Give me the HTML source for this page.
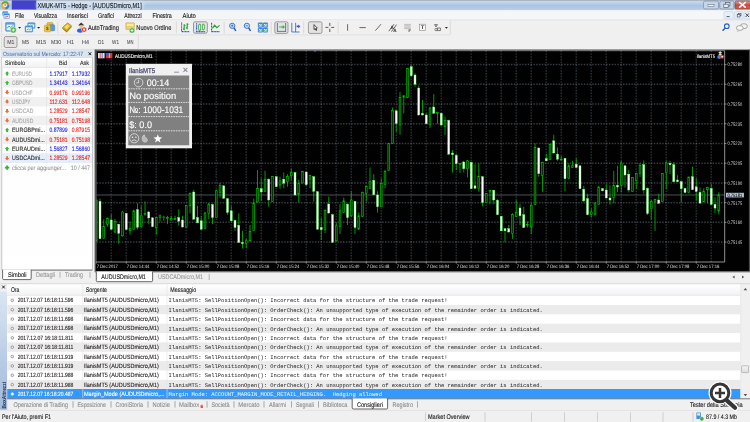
<!DOCTYPE html>
<html><head><meta charset="utf-8"><title>XMUK-MT5 - Hedge - [AUDUSDmicro,M1]</title>
<style>
html,body{margin:0;padding:0;background:#f0f0f0;overflow:hidden}
svg{display:block;will-change:transform;opacity:0.999}
text{font-family:"Liberation Sans","DejaVu Sans",sans-serif;white-space:pre;text-rendering:geometricPrecision}
text.m{font-family:"Liberation Mono","DejaVu Sans Mono",monospace}
</style></head><body>
<svg width="750" height="422" viewBox="0 0 750 422">
<defs>
<linearGradient id="gt" x1="0" y1="0" x2="0" y2="1"><stop offset="0" stop-color="#8f949a"/><stop offset="0.08" stop-color="#c9dbee"/><stop offset="0.35" stop-color="#b9cfe8"/><stop offset="0.55" stop-color="#a9c3e1"/><stop offset="0.85" stop-color="#b3cbe6"/><stop offset="1" stop-color="#c3d6eb"/></linearGradient>
<linearGradient id="gh" x1="0" y1="0" x2="0" y2="1"><stop offset="0" stop-color="#ffffff"/><stop offset="1" stop-color="#f1f2f4"/></linearGradient>
<linearGradient id="gs" x1="0" y1="0" x2="0" y2="1"><stop offset="0" stop-color="#dfe8f4"/><stop offset="1" stop-color="#9fb9dc"/></linearGradient>
<linearGradient id="gb" x1="0" y1="0" x2="0" y2="1"><stop offset="0" stop-color="#f6f6f6"/><stop offset="1" stop-color="#dcdcdc"/></linearGradient>
<linearGradient id="gx" x1="0" y1="0" x2="0" y2="1"><stop offset="0" stop-color="#e2a49c"/><stop offset="0.5" stop-color="#c9483c"/><stop offset="1" stop-color="#d4604c"/></linearGradient>
<filter id="blur" x="-2%" y="-2%" width="104%" height="104%" color-interpolation-filters="sRGB"><feGaussianBlur stdDeviation="0.3"/></filter>
<filter id="glow" x="-10%" y="-60%" width="120%" height="220%"><feGaussianBlur stdDeviation="1.6"/></filter>
<clipPath id="cc"><rect x="96" y="51" width="628.6" height="211"/></clipPath>
</defs>

<g filter="url(#blur)">
<rect x="-6.00" y="-6.00" width="762.00" height="434.00" fill="#f0f0f0" />
<rect x="-6.00" y="0.00" width="762.00" height="10.30" fill="url(#gt)" />
<rect x="-6.00" y="-6.00" width="762.00" height="6.20" fill="#8f949a" />
<circle cx="5.2" cy="5.3" r="4.1" fill="#d6b13c"/><path d="M5.2 5.3 L1.6 3.4 A4.1 4.1 0 0 1 8.9 3.6 Z" fill="#55ae42"/><path d="M5.2 5.3 L9.2 4.4 A4.1 4.1 0 0 1 5.6 9.4 Z" fill="#3f7cc6"/><circle cx="5.1" cy="5.2" r="2.0" fill="#f4efe4"/><circle cx="5.2" cy="5.1" r="1.0" fill="#e8903c"/>
<rect x="11.80" y="0.30" width="24.50" height="9.20" fill="#4242cb" />
<rect x="36" y="1.6" width="108" height="7.4" rx="3.5" fill="#ffffff" opacity="0.42" filter="url(#glow)"/>
<text  x="37.50" y="7.93" font-size="7.31" fill="#15171a" textLength="104.20" lengthAdjust="spacingAndGlyphs" stroke="#15171a" stroke-width="0.12" >XMUK-MT5 - Hedge - [AUDUSDmicro,M1]</text>
<rect x="703.50" y="1.00" width="15.00" height="8.00" fill="#c3d5ea" rx="1.5" stroke="#6f8299" stroke-width="0.6"/>
<rect x="708.00" y="4.60" width="6.00" height="1.80" fill="#f4f6f8" stroke="#59636f" stroke-width="0.5"/>
<rect x="719.80" y="1.00" width="14.00" height="8.00" fill="#c3d5ea" rx="1.5" stroke="#6f8299" stroke-width="0.6"/>
<rect x="725.50" y="2.60" width="4.40" height="3.40" fill="#e6ebf0" stroke="#555f6b" stroke-width="0.7"/>
<rect x="723.80" y="4.20" width="4.40" height="3.40" fill="#eef2f6" stroke="#555f6b" stroke-width="0.7"/>
<rect x="735.00" y="1.00" width="21.50" height="8.00" fill="url(#gx)" rx="1.5" stroke="#7a3a33" stroke-width="0.6"/>
<path d="M739.6 2.6 L745.2 7.2 M745.2 2.6 L739.6 7.2" stroke="#ffffff" stroke-width="1.6" stroke-linecap="round"/>
<rect x="-6.00" y="10.30" width="762.00" height="9.40" fill="#f5f6f8" />
<line x1="-6.00" y1="19.90" x2="756.00" y2="19.90" stroke="#dadbdd" stroke-width="0.7" />
<rect x="2.30" y="11.20" width="5.80" height="4.60" fill="#4f9be8" rx="0.8"/>
<rect x="3.40" y="13.20" width="6.40" height="5.60" fill="#3a86dd" rx="0.8" stroke="#eaf3fd" stroke-width="0.5"/>
<rect x="4.30" y="15.20" width="4.60" height="2.80" fill="#f4f7fb" />
<line x1="4.80" y1="17.20" x2="8.20" y2="16.40" stroke="#e0522a" stroke-width="0.9" />
<text  x="15.00" y="17.55" font-size="6.8" fill="#1c1c1c" textLength="9.00" lengthAdjust="spacingAndGlyphs" stroke="#1c1c1c" stroke-width="0.12" >File</text>
<text  x="34.00" y="17.55" font-size="6.8" fill="#1c1c1c" textLength="23.00" lengthAdjust="spacingAndGlyphs" stroke="#1c1c1c" stroke-width="0.12" >Visualizza</text>
<text  x="67.00" y="17.55" font-size="6.8" fill="#1c1c1c" textLength="21.00" lengthAdjust="spacingAndGlyphs" stroke="#1c1c1c" stroke-width="0.12" >Inserisci</text>
<text  x="98.00" y="17.55" font-size="6.8" fill="#1c1c1c" textLength="16.00" lengthAdjust="spacingAndGlyphs" stroke="#1c1c1c" stroke-width="0.12" >Grafici</text>
<text  x="124.20" y="17.55" font-size="6.8" fill="#1c1c1c" textLength="17.50" lengthAdjust="spacingAndGlyphs" stroke="#1c1c1c" stroke-width="0.12" >Attrezzi</text>
<text  x="152.50" y="17.55" font-size="6.8" fill="#1c1c1c" textLength="19.20" lengthAdjust="spacingAndGlyphs" stroke="#1c1c1c" stroke-width="0.12" >Finestra</text>
<text  x="182.50" y="17.55" font-size="6.8" fill="#1c1c1c" textLength="13.30" lengthAdjust="spacingAndGlyphs" stroke="#1c1c1c" stroke-width="0.12" >Aiuto</text>
<rect x="724.00" y="11.60" width="9.30" height="7.40" fill="#e7eff9" rx="0.8" stroke="#b9c9de" stroke-width="0.5"/>
<rect x="734.60" y="11.60" width="8.60" height="7.40" fill="#e7eff9" rx="0.8" stroke="#b9c9de" stroke-width="0.5"/>
<rect x="744.20" y="11.60" width="6.50" height="7.40" fill="#e7eff9" rx="0.8" stroke="#b9c9de" stroke-width="0.5"/>
<line x1="726.60" y1="16.60" x2="729.60" y2="16.60" stroke="#3a4450" stroke-width="0.9" />
<rect x="738.20" y="13.40" width="2.80" height="2.40" fill="none" stroke="#3a4450" stroke-width="0.6"/>
<rect x="737.20" y="14.60" width="2.80" height="2.40" fill="#e7eff9" stroke="#3a4450" stroke-width="0.6"/>
<path d="M745.6 13.4 L749 17 M749 13.4 L745.6 17" stroke="#2c343e" stroke-width="0.9"/>
<rect x="-6.00" y="20.30" width="456.30" height="14.60" fill="#f0f0f0" />
<line x1="450.30" y1="20.50" x2="450.30" y2="34.80" stroke="#cfcfcf" stroke-width="0.6" />
<line x1="-6.00" y1="34.90" x2="450.30" y2="34.90" stroke="#d5d5d5" stroke-width="0.6" />
<line x1="-6.00" y1="49.40" x2="138.30" y2="49.40" stroke="#d5d5d5" stroke-width="0.6" />
<line x1="138.30" y1="35.20" x2="138.30" y2="49.40" stroke="#cfcfcf" stroke-width="0.6" />
<line x1="1.60" y1="21.50" x2="1.60" y2="33.30" stroke="#b4b4b4" stroke-width="0.7" stroke-dasharray="0.7 0.7"/>
<line x1="1.60" y1="36.30" x2="1.60" y2="48.10" stroke="#b4b4b4" stroke-width="0.7" stroke-dasharray="0.7 0.7"/>
<line x1="303.70" y1="21.50" x2="303.70" y2="33.30" stroke="#b4b4b4" stroke-width="0.7" stroke-dasharray="0.7 0.7"/>
<line x1="58.00" y1="21.80" x2="58.00" y2="33.20" stroke="#b9b9b9" stroke-width="0.6" />
<line x1="58.60" y1="21.80" x2="58.60" y2="33.20" stroke="#fbfbfb" stroke-width="0.5" />
<line x1="176.40" y1="21.80" x2="176.40" y2="33.20" stroke="#b9b9b9" stroke-width="0.6" />
<line x1="177.00" y1="21.80" x2="177.00" y2="33.20" stroke="#fbfbfb" stroke-width="0.5" />
<line x1="224.30" y1="21.80" x2="224.30" y2="33.20" stroke="#b9b9b9" stroke-width="0.6" />
<line x1="224.90" y1="21.80" x2="224.90" y2="33.20" stroke="#fbfbfb" stroke-width="0.5" />
<line x1="271.30" y1="21.80" x2="271.30" y2="33.20" stroke="#b9b9b9" stroke-width="0.6" />
<line x1="271.90" y1="21.80" x2="271.90" y2="33.20" stroke="#fbfbfb" stroke-width="0.5" />
<line x1="338.30" y1="21.80" x2="338.30" y2="33.20" stroke="#b9b9b9" stroke-width="0.6" />
<line x1="338.90" y1="21.80" x2="338.90" y2="33.20" stroke="#fbfbfb" stroke-width="0.5" />
<rect x="5.60" y="22.60" width="9.00" height="8.60" fill="#58a4ea" rx="0.7" stroke="#2f75c8" stroke-width="0.5"/>
<rect x="6.60" y="24.60" width="7.00" height="5.60" fill="#e9f2fb" />
<path d="M7 28.4 L9 26 L10.6 27.6 L13 25.4" stroke="#3da53a" stroke-width="0.8" fill="none"/>
<circle cx="13.3" cy="30" r="3.0" fill="#3cb030" stroke="#f0f0f0" stroke-width="0.5"/>
<path d="M11.6 30 H15 M13.3 28.3 V31.7" stroke="#fff" stroke-width="1"/>
<path d="M18.10 27.05 L21.10 27.05 L19.60 28.85 Z" fill="#222"/>
<rect x="27.80" y="22.80" width="7.20" height="5.40" fill="#5aa4ea" rx="0.6" stroke="#2f75c8" stroke-width="0.5"/>
<rect x="28.60" y="24.00" width="5.60" height="3.40" fill="#eaf3fc" />
<rect x="25.20" y="26.00" width="7.40" height="6.00" fill="#4d9ae6" rx="0.6" stroke="#2f75c8" stroke-width="0.5"/>
<rect x="26.00" y="27.40" width="5.80" height="3.80" fill="#eef5fc" />
<path d="M26.6 30 L28.4 29 L29.6 29.8 L31.4 28.4" stroke="#3da53a" stroke-width="0.8" fill="none"/>
<path d="M29.4 25.8 L30.8 24.8 L32 25.4 L33.6 24.4" stroke="#3da53a" stroke-width="0.7" fill="none"/>
<path d="M37.10 27.05 L40.10 27.05 L38.60 28.85 Z" fill="#222"/>
<rect x="47.00" y="22.60" width="6.00" height="7.00" fill="#e6c04e" rx="0.8" stroke="#b88d1c" stroke-width="0.5"/>
<rect x="49.40" y="24.80" width="5.20" height="6.00" fill="#4f9de8" rx="0.8" stroke="#2b6fc0" stroke-width="0.5"/>
<rect x="44.40" y="25.20" width="6.00" height="6.60" fill="#efc940" rx="0.8" stroke="#b88d1c" stroke-width="0.5"/>
<text  x="46.10" y="30.31" font-size="4.74" fill="#7a5a08" font-weight="bold" stroke="#7a5a08" stroke-width="0.12" >$</text>
<path d="M62.4 27.4 L67.6 22.8 L71.6 25.8 L66.6 31.0 Z" fill="#dcae24" stroke="#94720f" stroke-width="0.5"/>
<path d="M64.2 27.2 L67.5 24.3 L69.9 26.0 L66.7 29.3 Z" fill="#f6da68"/>
<path d="M62.4 27.4 L66.6 31.0 L71.6 25.8 L71.6 27.2 L66.6 32.6 L62.4 28.8 Z" fill="#a67c12"/>
<path d="M78.2 25.2 L81.2 22.6 L84.2 25.2 L81.2 26.0 Z" fill="#3a3a3a"/>
<circle cx="81.3" cy="27.0" r="1.9" fill="#e9c09a"/>
<ellipse cx="80.2" cy="30.6" rx="3.2" ry="2.2" fill="#2b66d6"/>
<circle cx="84.1" cy="29.6" r="2.6" fill="#e23426" stroke="#ffffff" stroke-width="0.5"/>
<rect x="83.10" y="28.60" width="2.00" height="2.00" fill="#ffffff" />
<text  x="88.00" y="30.05" font-size="6.8" fill="#1c1c1c" textLength="31.00" lengthAdjust="spacingAndGlyphs" stroke="#1c1c1c" stroke-width="0.12" >AutoTrading</text>
<rect x="125.80" y="22.80" width="8.60" height="6.80" fill="#ecd06a" rx="0.6" stroke="#c4a23a" stroke-width="0.5"/>
<rect x="126.80" y="23.80" width="6.60" height="2.20" fill="#f8eaae" />
<circle cx="132.0" cy="30.4" r="2.7" fill="#3cb030" stroke="#f0f0f0" stroke-width="0.5"/>
<path d="M130.5 30.4 H133.5 M132 28.9 V31.9" stroke="#fff" stroke-width="0.9"/>
<text  x="136.30" y="30.05" font-size="6.8" fill="#1c1c1c" textLength="35.00" lengthAdjust="spacingAndGlyphs" stroke="#1c1c1c" stroke-width="0.12" >Nuovo Ordine</text>
<path d="M181.6 22.6 V31.6 H189.4" stroke="#2256d2" stroke-width="1.05" fill="none" stroke-dasharray="1.1 0.45"/>
<path d="M184.2 24.2 V30.2 M183 28.8 H184.2 M184.2 25.4 H185.4 M187.2 23.2 V29.2 M186 27.8 H187.2 M187.2 24.4 H188.4" stroke="#2a9f32" stroke-width="1.15" fill="none"/>
<rect x="193.50" y="21.80" width="13.80" height="11.40" fill="#e3e3e3" rx="1.6" stroke="#747474" stroke-width="0.7"/>
<path d="M196.6 23.2 V31.6 H204.8" stroke="#2256d2" stroke-width="1.05" fill="none" stroke-dasharray="1.1 0.45"/>
<line x1="199.70" y1="23.60" x2="199.70" y2="31.00" stroke="#2a9f32" stroke-width="0.7" />
<line x1="203.30" y1="23.60" x2="203.30" y2="30.40" stroke="#2a9f32" stroke-width="0.7" />
<rect x="198.70" y="24.80" width="2.00" height="5.20" fill="#f2fbf2" stroke="#2a9f32" stroke-width="0.7"/>
<rect x="202.30" y="24.80" width="2.00" height="4.40" fill="#f2fbf2" stroke="#2a9f32" stroke-width="0.7"/>
<path d="M211.6 22.8 V31.6 H219.8" stroke="#2256d2" stroke-width="1.05" fill="none" stroke-dasharray="1.1 0.45"/>
<path d="M212.4 28.4 L214.6 25.2 L216.8 27.6 L219.6 25.4" stroke="#2a9f32" stroke-width="1.15" fill="none"/>
<circle cx="232.2" cy="25.8" r="2.6" fill="#d4e6fa" stroke="#2f63c8" stroke-width="0.9"/>
<line x1="234.00" y1="27.80" x2="235.80" y2="31.00" stroke="#2a58bc" stroke-width="1.5" />
<line x1="230.90" y1="25.80" x2="233.50" y2="25.80" stroke="#2a58bc" stroke-width="0.7" />
<line x1="232.20" y1="24.50" x2="232.20" y2="27.10" stroke="#2a58bc" stroke-width="0.7" />
<circle cx="246.9" cy="25.8" r="2.6" fill="#d4e6fa" stroke="#2f63c8" stroke-width="0.9"/>
<line x1="248.70" y1="27.80" x2="250.50" y2="31.00" stroke="#2a58bc" stroke-width="1.5" />
<line x1="245.60" y1="25.80" x2="248.20" y2="25.80" stroke="#2a58bc" stroke-width="0.7" />
<rect x="258.20" y="22.80" width="4.40" height="4.40" fill="#3f8ee6" rx="0.4" stroke="#2b6fc0" stroke-width="0.4"/>
<rect x="259.00" y="24.00" width="2.80" height="2.50" fill="#e4eef9" />
<path d="M259.10 26.00 L260.30 24.70 L261.70 25.40" stroke="#3fb53a" stroke-width="0.8" fill="none"/>
<rect x="258.20" y="27.80" width="4.40" height="4.40" fill="#3f8ee6" rx="0.4" stroke="#2b6fc0" stroke-width="0.4"/>
<rect x="259.00" y="29.00" width="2.80" height="2.50" fill="#e4eef9" />
<path d="M259.10 31.00 L260.30 29.70 L261.70 30.40" stroke="#3fb53a" stroke-width="0.8" fill="none"/>
<rect x="263.20" y="22.80" width="4.40" height="4.40" fill="#3f8ee6" rx="0.4" stroke="#2b6fc0" stroke-width="0.4"/>
<rect x="264.00" y="24.00" width="2.80" height="2.50" fill="#e4eef9" />
<path d="M264.10 26.00 L265.30 24.70 L266.70 25.40" stroke="#3fb53a" stroke-width="0.8" fill="none"/>
<rect x="263.20" y="27.80" width="4.40" height="4.40" fill="#3f8ee6" rx="0.4" stroke="#2b6fc0" stroke-width="0.4"/>
<rect x="264.00" y="29.00" width="2.80" height="2.50" fill="#e4eef9" />
<path d="M264.10 31.00 L265.30 29.70 L266.70 30.40" stroke="#3fb53a" stroke-width="0.8" fill="none"/>
<rect x="274.80" y="21.80" width="13.20" height="11.60" fill="#e3e3e3" rx="1.6" stroke="#7b7b7b" stroke-width="0.7"/>
<path d="M277.4 23 V32 M277.4 31.4 H285.6 M285.6 23 V32" stroke="#2a62c8" stroke-width="0.8" fill="none"/>
<path d="M279.2 26.6 H282.6 V25 L285 27 L282.6 29 V27.6 H279.2 Z" fill="#34b23a"/>
<path d="M291.8 22.8 V32 H299.6 M295.6 22.8 V32" stroke="#2a62c8" stroke-width="0.8" fill="none"/>
<path d="M296.6 25.4 H298.4 V24.4 L300.4 26.4 L298.4 28.2 V27.2 H296.6 Z" fill="#2a62c8"/>
<rect x="308.40" y="21.80" width="13.60" height="11.60" fill="#e3e3e3" rx="1.6" stroke="#7b7b7b" stroke-width="0.7"/>
<path d="M314.0 24.6 L314.0 29.6 L315.1 28.6 L316.0 30.5 L316.8 30.1 L315.9 28.3 L317.3 28.1 Z" fill="#fdfdfd" stroke="#0c0c0c" stroke-width="0.7" stroke-linejoin="round"/>
<path d="M329.8 22.8 V26 M329.8 28.8 V32 M325.4 27.4 H328.4 M331.2 27.4 H334.2" stroke="#333" stroke-width="0.8"/>
<line x1="347.60" y1="24.20" x2="347.60" y2="30.80" stroke="#444" stroke-width="0.8" />
<line x1="359.40" y1="27.60" x2="365.80" y2="27.60" stroke="#444" stroke-width="0.8" />
<line x1="375.40" y1="30.60" x2="381.00" y2="24.20" stroke="#444" stroke-width="0.8" />
<path d="M388.8 31.2 L394 24.2 M391.4 31.6 L396.6 24.6" stroke="#444" stroke-width="0.8"/>
<text  x="390.60" y="28.63" font-size="4.53" fill="#333" font-weight="bold" stroke="#333" stroke-width="0.12" >A</text>
<text  x="393.20" y="32.03" font-size="4.53" fill="#333" font-weight="bold" stroke="#333" stroke-width="0.12" >A</text>
<line x1="404.20" y1="24.40" x2="410.80" y2="24.40" stroke="#9a9a9a" stroke-width="0.6" />
<line x1="404.20" y1="25.80" x2="410.80" y2="25.80" stroke="#9a9a9a" stroke-width="0.6" />
<line x1="404.20" y1="27.20" x2="410.80" y2="27.20" stroke="#9a9a9a" stroke-width="0.6" />
<line x1="404.20" y1="28.60" x2="410.80" y2="28.60" stroke="#9a9a9a" stroke-width="0.6" />
<text  x="408.60" y="31.54" font-size="3.71" fill="#444" font-weight="bold" stroke="#444" stroke-width="0.12" >F</text>
<rect x="419.40" y="24.20" width="6.20" height="6.20" fill="#f6f6f6" stroke="#8a8a8a" stroke-width="0.6"/>
<text  x="420.90" y="29.25" font-size="5.15" fill="#333" font-weight="bold" stroke="#333" stroke-width="0.12" >T</text>
<path d="M434.6 24.6 L437.4 24.6 L436 27 Z M437.4 28 h3 v2.6 h-3 Z" fill="none" stroke="#444" stroke-width="0.7"/>
<circle cx="436" cy="29.6" r="1.2" fill="none" stroke="#444" stroke-width="0.6"/>
<path d="M444.90 27.05 L447.90 27.05 L446.40 28.85 Z" fill="#222"/>
<circle cx="726.8" cy="26.2" r="2.3" fill="#eaf2ff" stroke="#2a5fc4" stroke-width="1.1"/>
<line x1="725.20" y1="28.00" x2="722.60" y2="30.80" stroke="#2a5fc4" stroke-width="1.5" />
<ellipse cx="743.8" cy="26.2" rx="3.6" ry="2.5" fill="#f3f3f3" stroke="#7e7e7e" stroke-width="0.65"/>
<ellipse cx="739.8" cy="28.0" rx="3.4" ry="2.4" fill="#fafafa" stroke="#7e7e7e" stroke-width="0.65"/>
<path d="M738.4 30 L737.4 31.6 L740 30.3 Z" fill="#fafafa" stroke="#9a9a9a" stroke-width="0.4"/>
<rect x="4.20" y="36.60" width="12.80" height="10.90" fill="#e4e4e4" rx="1.6" stroke="#7b7b7b" stroke-width="0.7"/>
<text  x="7.20" y="44.18" font-size="5.77" fill="#4a4a4a" textLength="7.20" lengthAdjust="spacingAndGlyphs" stroke="#4a4a4a" stroke-width="0.05" >M1</text>
<text  x="22.00" y="44.18" font-size="5.77" fill="#4a4a4a" textLength="7.00" lengthAdjust="spacingAndGlyphs" stroke="#4a4a4a" stroke-width="0.05" >M5</text>
<text  x="36.00" y="44.18" font-size="5.77" fill="#4a4a4a" textLength="10.00" lengthAdjust="spacingAndGlyphs" stroke="#4a4a4a" stroke-width="0.05" >M15</text>
<text  x="51.00" y="44.18" font-size="5.77" fill="#4a4a4a" textLength="10.00" lengthAdjust="spacingAndGlyphs" stroke="#4a4a4a" stroke-width="0.05" >M30</text>
<text  x="67.00" y="44.18" font-size="5.77" fill="#4a4a4a" textLength="7.00" lengthAdjust="spacingAndGlyphs" stroke="#4a4a4a" stroke-width="0.05" >H1</text>
<text  x="82.00" y="44.18" font-size="5.77" fill="#4a4a4a" textLength="7.00" lengthAdjust="spacingAndGlyphs" stroke="#4a4a4a" stroke-width="0.05" >H4</text>
<text  x="98.00" y="44.18" font-size="5.77" fill="#4a4a4a" textLength="6.00" lengthAdjust="spacingAndGlyphs" stroke="#4a4a4a" stroke-width="0.05" >D1</text>
<text  x="112.00" y="44.18" font-size="5.77" fill="#4a4a4a" textLength="7.00" lengthAdjust="spacingAndGlyphs" stroke="#4a4a4a" stroke-width="0.05" >W1</text>
<text  x="127.00" y="44.18" font-size="5.77" fill="#4a4a4a" textLength="6.40" lengthAdjust="spacingAndGlyphs" stroke="#4a4a4a" stroke-width="0.05" >MN</text>
<rect x="1.20" y="50.00" width="91.60" height="7.20" fill="#dbe5f3" />
<text  x="3.00" y="55.89" font-size="6.08" fill="#526a98" textLength="80.00" lengthAdjust="spacingAndGlyphs" >Osservatorio sul Mercato: 17:22:47</text>
<path d="M88.6 52.3 L91.2 55.1 M91.2 52.3 L88.6 55.1" stroke="#111" stroke-width="0.9"/>
<rect x="1.90" y="57.30" width="90.60" height="212.60" fill="#ffffff" stroke="#a8a8a8" stroke-width="0.6"/>
<rect x="2.00" y="57.60" width="90.00" height="9.80" fill="url(#gh)" />
<line x1="2.00" y1="67.50" x2="92.00" y2="67.50" stroke="#dcdcdc" stroke-width="0.6" />
<text  x="5.00" y="65.46" font-size="6.28" fill="#2c2c2c" textLength="20.00" lengthAdjust="spacingAndGlyphs" stroke="#2c2c2c" stroke-width="0.12" >Simbolo</text>
<text  x="59.00" y="65.46" font-size="6.28" fill="#2c2c2c" textLength="8.00" lengthAdjust="spacingAndGlyphs" stroke="#2c2c2c" stroke-width="0.12" >Bid</text>
<text  x="80.00" y="65.46" font-size="6.28" fill="#2c2c2c" textLength="9.00" lengthAdjust="spacingAndGlyphs" stroke="#2c2c2c" stroke-width="0.12" >Ask</text>
<path d="M7.1 71.21 L9.3 73.61 H8.1 V75.41 H6.1 V73.61 H4.9 Z" fill="#36ba36"/>
<text  x="12.00" y="75.69" font-size="6.33" fill="#a0a0a0" textLength="20.00" lengthAdjust="spacingAndGlyphs" stroke="#a0a0a0" stroke-width="0.05" >EURUSD</text>
<text  x="49.50" y="75.71" font-size="6.39" fill="#2222e6" textLength="18.10" lengthAdjust="spacingAndGlyphs" stroke="#2222e6" stroke-width="0.12" >1.17917</text>
<text  x="71.80" y="75.71" font-size="6.39" fill="#2222e6" textLength="18.20" lengthAdjust="spacingAndGlyphs" stroke="#2222e6" stroke-width="0.12" >1.17932</text>
<rect x="2.00" y="78.12" width="90.00" height="9.42" fill="#f0f0f0" />
<path d="M7.1 80.63 L9.3 83.03 H8.1 V84.83 H6.1 V83.03 H4.9 Z" fill="#36ba36"/>
<text  x="12.00" y="85.11" font-size="6.33" fill="#a0a0a0" textLength="20.50" lengthAdjust="spacingAndGlyphs" stroke="#a0a0a0" stroke-width="0.05" >GBPUSD</text>
<text  x="49.50" y="85.13" font-size="6.39" fill="#2222e6" textLength="18.10" lengthAdjust="spacingAndGlyphs" stroke="#2222e6" stroke-width="0.12" >1.34143</text>
<text  x="71.80" y="85.13" font-size="6.39" fill="#2222e6" textLength="18.20" lengthAdjust="spacingAndGlyphs" stroke="#2222e6" stroke-width="0.12" >1.34164</text>
<path d="M7.1 94.45 L9.3 92.05 H8.1 V90.25 H6.1 V92.05 H4.9 Z" fill="#f06a3c"/>
<text  x="12.00" y="94.53" font-size="6.33" fill="#a0a0a0" textLength="20.50" lengthAdjust="spacingAndGlyphs" stroke="#a0a0a0" stroke-width="0.05" >USDCHF</text>
<text  x="49.50" y="94.55" font-size="6.39" fill="#e62222" textLength="18.10" lengthAdjust="spacingAndGlyphs" stroke="#e62222" stroke-width="0.12" >0.99176</text>
<text  x="71.80" y="94.55" font-size="6.39" fill="#e62222" textLength="18.20" lengthAdjust="spacingAndGlyphs" stroke="#e62222" stroke-width="0.12" >0.99196</text>
<rect x="2.00" y="96.96" width="90.00" height="9.42" fill="#f0f0f0" />
<path d="M7.1 103.87 L9.3 101.47 H8.1 V99.67 H6.1 V101.47 H4.9 Z" fill="#f06a3c"/>
<text  x="12.00" y="103.95" font-size="6.33" fill="#a0a0a0" textLength="18.50" lengthAdjust="spacingAndGlyphs" stroke="#a0a0a0" stroke-width="0.05" >USDJPY</text>
<text  x="49.50" y="103.97" font-size="6.39" fill="#e62222" textLength="18.10" lengthAdjust="spacingAndGlyphs" stroke="#e62222" stroke-width="0.12" >112.631</text>
<text  x="71.80" y="103.97" font-size="6.39" fill="#e62222" textLength="18.20" lengthAdjust="spacingAndGlyphs" stroke="#e62222" stroke-width="0.12" >112.648</text>
<path d="M7.1 113.29 L9.3 110.89 H8.1 V109.09 H6.1 V110.89 H4.9 Z" fill="#f06a3c"/>
<text  x="12.00" y="113.37" font-size="6.33" fill="#a0a0a0" textLength="21.30" lengthAdjust="spacingAndGlyphs" stroke="#a0a0a0" stroke-width="0.05" >USDCAD</text>
<text  x="49.50" y="113.39" font-size="6.39" fill="#e62222" textLength="18.10" lengthAdjust="spacingAndGlyphs" stroke="#e62222" stroke-width="0.12" >1.28529</text>
<text  x="71.80" y="113.39" font-size="6.39" fill="#e62222" textLength="18.20" lengthAdjust="spacingAndGlyphs" stroke="#e62222" stroke-width="0.12" >1.28547</text>
<rect x="2.00" y="115.80" width="90.00" height="9.42" fill="#f0f0f0" />
<path d="M7.1 122.71 L9.3 120.31 H8.1 V118.51 H6.1 V120.31 H4.9 Z" fill="#f06a3c"/>
<text  x="12.00" y="122.79" font-size="6.33" fill="#a0a0a0" textLength="21.30" lengthAdjust="spacingAndGlyphs" stroke="#a0a0a0" stroke-width="0.05" >AUDUSD</text>
<text  x="49.50" y="122.81" font-size="6.39" fill="#e62222" textLength="18.10" lengthAdjust="spacingAndGlyphs" stroke="#e62222" stroke-width="0.12" >0.75181</text>
<text  x="71.80" y="122.81" font-size="6.39" fill="#e62222" textLength="18.20" lengthAdjust="spacingAndGlyphs" stroke="#e62222" stroke-width="0.12" >0.75198</text>
<path d="M7.1 127.73 L9.3 130.13 H8.1 V131.93 H6.1 V130.13 H4.9 Z" fill="#36ba36"/>
<text  x="12.00" y="132.21" font-size="6.33" fill="#2a2a2a" textLength="33.00" lengthAdjust="spacingAndGlyphs" stroke="#2a2a2a" stroke-width="0.12" >EURGBPmi...</text>
<text  x="49.50" y="132.23" font-size="6.39" fill="#2222e6" textLength="18.10" lengthAdjust="spacingAndGlyphs" stroke="#2222e6" stroke-width="0.12" >0.87899</text>
<text  x="71.80" y="132.23" font-size="6.39" fill="#e62222" textLength="18.20" lengthAdjust="spacingAndGlyphs" stroke="#e62222" stroke-width="0.12" >0.87915</text>
<rect x="2.00" y="134.64" width="90.00" height="9.42" fill="#f0f0f0" />
<path d="M7.1 141.55 L9.3 139.15 H8.1 V137.35 H6.1 V139.15 H4.9 Z" fill="#f06a3c"/>
<text  x="12.00" y="141.63" font-size="6.33" fill="#2a2a2a" textLength="32.70" lengthAdjust="spacingAndGlyphs" stroke="#2a2a2a" stroke-width="0.12" >AUDUSDmi...</text>
<text  x="49.50" y="141.65" font-size="6.39" fill="#e62222" textLength="18.10" lengthAdjust="spacingAndGlyphs" stroke="#e62222" stroke-width="0.12" >0.75181</text>
<text  x="71.80" y="141.65" font-size="6.39" fill="#e62222" textLength="18.20" lengthAdjust="spacingAndGlyphs" stroke="#e62222" stroke-width="0.12" >0.75198</text>
<path d="M7.1 146.57 L9.3 148.97 H8.1 V150.77 H6.1 V148.97 H4.9 Z" fill="#36ba36"/>
<text  x="12.00" y="151.05" font-size="6.33" fill="#2a2a2a" textLength="33.00" lengthAdjust="spacingAndGlyphs" stroke="#2a2a2a" stroke-width="0.12" >EURAUDmi...</text>
<text  x="49.50" y="151.07" font-size="6.39" fill="#2222e6" textLength="18.10" lengthAdjust="spacingAndGlyphs" stroke="#2222e6" stroke-width="0.12" >1.56827</text>
<text  x="71.80" y="151.07" font-size="6.39" fill="#2222e6" textLength="18.20" lengthAdjust="spacingAndGlyphs" stroke="#2222e6" stroke-width="0.12" >1.56860</text>
<rect x="2.00" y="153.48" width="90.00" height="9.42" fill="#f0f0f0" />
<rect x="2.00" y="153.48" width="90.00" height="9.42" fill="#e4eefb" />
<path d="M7.1 160.39 L9.3 157.99 H8.1 V156.19 H6.1 V157.99 H4.9 Z" fill="#f06a3c"/>
<text  x="12.00" y="160.47" font-size="6.33" fill="#2a2a2a" textLength="32.70" lengthAdjust="spacingAndGlyphs" stroke="#2a2a2a" stroke-width="0.12" >USDCADmi...</text>
<text  x="49.50" y="160.49" font-size="6.39" fill="#e62222" textLength="18.10" lengthAdjust="spacingAndGlyphs" stroke="#e62222" stroke-width="0.12" >1.28529</text>
<text  x="71.80" y="160.49" font-size="6.39" fill="#e62222" textLength="18.20" lengthAdjust="spacingAndGlyphs" stroke="#e62222" stroke-width="0.12" >1.28547</text>
<path d="M6.2 165.41 H8 V166.71 H9.3 V168.51 H8 V169.81 H6.2 V168.51 H4.9 V166.71 H6.2 Z" fill="#2fb52f"/>
<text  x="12.00" y="169.89" font-size="6.33" fill="#929292" textLength="54.00" lengthAdjust="spacingAndGlyphs" stroke="#929292" stroke-width="0.05" >clicca per aggiunger...</text>
<text  x="70.80" y="169.91" font-size="6.39" fill="#929292" textLength="19.20" lengthAdjust="spacingAndGlyphs" stroke="#929292" stroke-width="0.05" >10 / 447</text>
<line x1="46.60" y1="57.60" x2="46.60" y2="162.90" stroke="#e3e3e3" stroke-width="0.6" />
<line x1="69.20" y1="57.60" x2="69.20" y2="162.90" stroke="#e3e3e3" stroke-width="0.6" />
<line x1="31.00" y1="270.20" x2="92.40" y2="270.20" stroke="#5a5a5a" stroke-width="0.7" />
<path d="M2.6 269.8 V278.4 Q2.6 279.6 3.8 279.6 H30 Q31.2 279.6 31.2 278.4 V269.8" fill="#ffffff" stroke="#444" stroke-width="0.8"/>
<text  x="8.00" y="277.01" font-size="6.7" fill="#1a1a1a" textLength="18.60" lengthAdjust="spacingAndGlyphs" stroke="#1a1a1a" stroke-width="0.12" >Simboli</text>
<text  x="36.00" y="277.01" font-size="6.7" fill="#9a9a9a" textLength="19.00" lengthAdjust="spacingAndGlyphs" stroke="#9a9a9a" stroke-width="0.12" >Dettagli</text>
<text  x="65.00" y="277.01" font-size="6.7" fill="#9a9a9a" textLength="18.00" lengthAdjust="spacingAndGlyphs" stroke="#9a9a9a" stroke-width="0.12" >Trading</text>
<line x1="60.00" y1="271.80" x2="60.00" y2="277.60" stroke="#8a8a8a" stroke-width="0.6" />
<line x1="90.00" y1="271.80" x2="90.00" y2="277.60" stroke="#8a8a8a" stroke-width="0.6" />
<rect x="94.80" y="49.60" width="661.20" height="222.00" fill="#000000" />
<line x1="94.80" y1="49.70" x2="756.00" y2="49.70" stroke="#a8a8a8" stroke-width="0.7" />
<line x1="95.20" y1="49.60" x2="95.20" y2="271.60" stroke="#8c8c8c" stroke-width="0.8" />
<line x1="749.40" y1="49.60" x2="749.40" y2="271.60" stroke="#6a6a6a" stroke-width="0.8" />
<g stroke="#7d8b9a" stroke-width="1.5" stroke-dasharray="1.45 1.35" opacity="0.34">
<line x1="111.25" y1="50.6" x2="111.25" y2="262"/>
<line x1="126.25" y1="50.6" x2="126.25" y2="262"/>
<line x1="141.25" y1="50.6" x2="141.25" y2="262"/>
<line x1="156.25" y1="50.6" x2="156.25" y2="262"/>
<line x1="171.25" y1="50.6" x2="171.25" y2="262"/>
<line x1="186.25" y1="50.6" x2="186.25" y2="262"/>
<line x1="201.25" y1="50.6" x2="201.25" y2="262"/>
<line x1="216.25" y1="50.6" x2="216.25" y2="262"/>
<line x1="231.25" y1="50.6" x2="231.25" y2="262"/>
<line x1="246.25" y1="50.6" x2="246.25" y2="262"/>
<line x1="261.25" y1="50.6" x2="261.25" y2="262"/>
<line x1="276.25" y1="50.6" x2="276.25" y2="262"/>
<line x1="291.25" y1="50.6" x2="291.25" y2="262"/>
<line x1="306.25" y1="50.6" x2="306.25" y2="262"/>
<line x1="321.25" y1="50.6" x2="321.25" y2="262"/>
<line x1="336.25" y1="50.6" x2="336.25" y2="262"/>
<line x1="351.25" y1="50.6" x2="351.25" y2="262"/>
<line x1="366.25" y1="50.6" x2="366.25" y2="262"/>
<line x1="381.25" y1="50.6" x2="381.25" y2="262"/>
<line x1="396.25" y1="50.6" x2="396.25" y2="262"/>
<line x1="411.25" y1="50.6" x2="411.25" y2="262"/>
<line x1="426.25" y1="50.6" x2="426.25" y2="262"/>
<line x1="441.25" y1="50.6" x2="441.25" y2="262"/>
<line x1="456.25" y1="50.6" x2="456.25" y2="262"/>
<line x1="471.25" y1="50.6" x2="471.25" y2="262"/>
<line x1="486.25" y1="50.6" x2="486.25" y2="262"/>
<line x1="501.25" y1="50.6" x2="501.25" y2="262"/>
<line x1="516.25" y1="50.6" x2="516.25" y2="262"/>
<line x1="531.25" y1="50.6" x2="531.25" y2="262"/>
<line x1="546.25" y1="50.6" x2="546.25" y2="262"/>
<line x1="561.25" y1="50.6" x2="561.25" y2="262"/>
<line x1="576.25" y1="50.6" x2="576.25" y2="262"/>
<line x1="591.25" y1="50.6" x2="591.25" y2="262"/>
<line x1="606.25" y1="50.6" x2="606.25" y2="262"/>
<line x1="621.25" y1="50.6" x2="621.25" y2="262"/>
<line x1="636.25" y1="50.6" x2="636.25" y2="262"/>
<line x1="651.25" y1="50.6" x2="651.25" y2="262"/>
<line x1="666.25" y1="50.6" x2="666.25" y2="262"/>
<line x1="681.25" y1="50.6" x2="681.25" y2="262"/>
<line x1="696.25" y1="50.6" x2="696.25" y2="262"/>
<line x1="711.25" y1="50.6" x2="711.25" y2="262"/>
</g>
<g stroke="#7d8b9a" stroke-width="1.5" stroke-dasharray="1.45 1.35" opacity="0.43">
<line x1="96.6" y1="64.60" x2="724.6" y2="64.60"/>
<line x1="96.6" y1="84.32" x2="724.6" y2="84.32"/>
<line x1="96.6" y1="104.04" x2="724.6" y2="104.04"/>
<line x1="96.6" y1="123.76" x2="724.6" y2="123.76"/>
<line x1="96.6" y1="143.48" x2="724.6" y2="143.48"/>
<line x1="96.6" y1="163.20" x2="724.6" y2="163.20"/>
<line x1="96.6" y1="182.92" x2="724.6" y2="182.92"/>
<line x1="96.6" y1="202.64" x2="724.6" y2="202.64"/>
<line x1="96.6" y1="222.36" x2="724.6" y2="222.36"/>
<line x1="96.6" y1="242.08" x2="724.6" y2="242.08"/>
</g>
<path d="M313.7 50.4 h2.8 l-1.4 1.8z" fill="#4646e6"/>
<line x1="96.60" y1="195.00" x2="724.60" y2="195.00" stroke="#535c67" stroke-width="0.9" />
<g clip-path="url(#cc)">
<line x1="96.25" y1="200.00" x2="96.25" y2="240.80" stroke="#00c800" stroke-width="0.75"/>
<rect x="95.35" y="200.00" width="1.8" height="40.80" fill="#003200" stroke="#00d200" stroke-width="0.55"/>
<line x1="100.00" y1="198.70" x2="100.00" y2="238.70" stroke="#00c800" stroke-width="0.75"/>
<rect x="99.00" y="201.30" width="2.0" height="37.40" fill="#ffffff" stroke="#5cff5c" stroke-width="0.4"/>
<line x1="103.75" y1="219.20" x2="103.75" y2="238.30" stroke="#00c800" stroke-width="0.75"/>
<rect x="102.85" y="226.70" width="1.8" height="11.60" fill="#003200" stroke="#00d200" stroke-width="0.55"/>
<line x1="107.50" y1="217.50" x2="107.50" y2="226.70" stroke="#00c800" stroke-width="0.75"/>
<rect x="106.60" y="218.70" width="1.8" height="5.50" fill="#003200" stroke="#00d200" stroke-width="0.55"/>
<line x1="111.25" y1="214.20" x2="111.25" y2="230.00" stroke="#00c800" stroke-width="0.75"/>
<rect x="110.25" y="220.00" width="2.0" height="9.20" fill="#ffffff" stroke="#5cff5c" stroke-width="0.4"/>
<line x1="115.00" y1="219.20" x2="115.00" y2="233.00" stroke="#00c800" stroke-width="0.75"/>
<rect x="114.10" y="221.70" width="1.8" height="10.30" fill="#003200" stroke="#00d200" stroke-width="0.55"/>
<line x1="118.75" y1="223.70" x2="118.75" y2="243.70" stroke="#00c800" stroke-width="0.75"/>
<rect x="117.75" y="224.20" width="2.0" height="9.10" fill="#ffffff" stroke="#5cff5c" stroke-width="0.4"/>
<line x1="122.50" y1="210.80" x2="122.50" y2="236.70" stroke="#00c800" stroke-width="0.75"/>
<rect x="121.60" y="212.00" width="1.8" height="23.80" fill="#003200" stroke="#00d200" stroke-width="0.55"/>
<line x1="126.25" y1="213.00" x2="126.25" y2="230.00" stroke="#00c800" stroke-width="0.75"/>
<rect x="125.25" y="213.30" width="2.0" height="16.20" fill="#ffffff" stroke="#5cff5c" stroke-width="0.4"/>
<line x1="130.00" y1="221.70" x2="130.00" y2="234.70" stroke="#00c800" stroke-width="0.75"/>
<rect x="129.10" y="228.70" width="1.8" height="2.10" fill="#003200" stroke="#00d200" stroke-width="0.55"/>
<line x1="133.75" y1="209.70" x2="133.75" y2="230.00" stroke="#00c800" stroke-width="0.75"/>
<rect x="132.85" y="210.80" width="1.8" height="18.70" fill="#003200" stroke="#00d200" stroke-width="0.55"/>
<line x1="137.50" y1="203.30" x2="137.50" y2="229.50" stroke="#00c800" stroke-width="0.75"/>
<rect x="136.50" y="209.70" width="2.0" height="17.50" fill="#ffffff" stroke="#5cff5c" stroke-width="0.4"/>
<line x1="141.25" y1="205.80" x2="141.25" y2="226.70" stroke="#00c800" stroke-width="0.75"/>
<rect x="140.35" y="215.80" width="1.8" height="10.90" fill="#003200" stroke="#00d200" stroke-width="0.55"/>
<line x1="145.00" y1="201.30" x2="145.00" y2="215.00" stroke="#00c800" stroke-width="0.75"/>
<rect x="144.10" y="213.30" width="1.8" height="1.70" fill="#003200" stroke="#00d200" stroke-width="0.55"/>
<line x1="148.75" y1="210.80" x2="148.75" y2="224.20" stroke="#00c800" stroke-width="0.75"/>
<rect x="147.75" y="212.00" width="2.0" height="6.00" fill="#ffffff" stroke="#5cff5c" stroke-width="0.4"/>
<line x1="152.50" y1="217.50" x2="152.50" y2="227.20" stroke="#00c800" stroke-width="0.75"/>
<rect x="151.50" y="217.80" width="2.0" height="8.90" fill="#ffffff" stroke="#5cff5c" stroke-width="0.4"/>
<line x1="156.25" y1="217.00" x2="156.25" y2="234.70" stroke="#00c800" stroke-width="0.75"/>
<rect x="155.35" y="217.50" width="1.8" height="10.30" fill="#003200" stroke="#00d200" stroke-width="0.55"/>
<line x1="160.00" y1="214.50" x2="160.00" y2="221.70" stroke="#00c800" stroke-width="0.75"/>
<rect x="159.10" y="215.80" width="1.8" height="1.70" fill="#003200" stroke="#00d200" stroke-width="0.55"/>
<line x1="163.75" y1="215.80" x2="163.75" y2="220.80" stroke="#00c800" stroke-width="0.75"/>
<rect x="162.85" y="217.00" width="1.8" height="0.70" fill="#003200" stroke="#00d200" stroke-width="0.55"/>
<line x1="167.50" y1="215.80" x2="167.50" y2="224.20" stroke="#00c800" stroke-width="0.75"/>
<rect x="166.60" y="217.50" width="1.8" height="0.80" fill="#003200" stroke="#00d200" stroke-width="0.55"/>
<line x1="171.25" y1="215.80" x2="171.25" y2="220.80" stroke="#00c800" stroke-width="0.75"/>
<rect x="170.35" y="218.30" width="1.8" height="1.70" fill="#003200" stroke="#00d200" stroke-width="0.55"/>
<line x1="175.00" y1="215.80" x2="175.00" y2="220.00" stroke="#00c800" stroke-width="0.75"/>
<rect x="174.10" y="218.70" width="1.8" height="0.70" fill="#003200" stroke="#00d200" stroke-width="0.55"/>
<line x1="178.75" y1="209.20" x2="178.75" y2="225.80" stroke="#00c800" stroke-width="0.75"/>
<rect x="177.75" y="217.50" width="2.0" height="3.70" fill="#ffffff" stroke="#5cff5c" stroke-width="0.4"/>
<line x1="182.50" y1="215.80" x2="182.50" y2="227.50" stroke="#00c800" stroke-width="0.75"/>
<rect x="181.50" y="220.00" width="2.0" height="7.00" fill="#ffffff" stroke="#5cff5c" stroke-width="0.4"/>
<line x1="186.25" y1="205.00" x2="186.25" y2="227.80" stroke="#00c800" stroke-width="0.75"/>
<rect x="185.35" y="205.30" width="1.8" height="21.90" fill="#003200" stroke="#00d200" stroke-width="0.55"/>
<line x1="190.00" y1="192.50" x2="190.00" y2="213.30" stroke="#00c800" stroke-width="0.75"/>
<rect x="189.10" y="193.30" width="1.8" height="12.50" fill="#003200" stroke="#00d200" stroke-width="0.55"/>
<line x1="193.75" y1="189.70" x2="193.75" y2="219.50" stroke="#00c800" stroke-width="0.75"/>
<rect x="192.75" y="192.00" width="2.0" height="27.20" fill="#ffffff" stroke="#5cff5c" stroke-width="0.4"/>
<line x1="197.50" y1="205.80" x2="197.50" y2="223.30" stroke="#00c800" stroke-width="0.75"/>
<rect x="196.50" y="217.50" width="2.0" height="5.30" fill="#ffffff" stroke="#5cff5c" stroke-width="0.4"/>
<line x1="201.25" y1="215.80" x2="201.25" y2="230.00" stroke="#00c800" stroke-width="0.75"/>
<rect x="200.25" y="220.80" width="2.0" height="8.40" fill="#ffffff" stroke="#5cff5c" stroke-width="0.4"/>
<line x1="205.00" y1="212.00" x2="205.00" y2="228.70" stroke="#00c800" stroke-width="0.75"/>
<rect x="204.10" y="213.00" width="1.8" height="15.30" fill="#003200" stroke="#00d200" stroke-width="0.55"/>
<line x1="208.75" y1="203.00" x2="208.75" y2="219.20" stroke="#00c800" stroke-width="0.75"/>
<rect x="207.85" y="204.20" width="1.8" height="9.10" fill="#003200" stroke="#00d200" stroke-width="0.55"/>
<line x1="212.50" y1="203.70" x2="212.50" y2="224.20" stroke="#00c800" stroke-width="0.75"/>
<rect x="211.50" y="204.50" width="2.0" height="13.00" fill="#ffffff" stroke="#5cff5c" stroke-width="0.4"/>
<line x1="216.25" y1="189.70" x2="216.25" y2="218.00" stroke="#00c800" stroke-width="0.75"/>
<rect x="215.35" y="190.80" width="1.8" height="26.70" fill="#003200" stroke="#00d200" stroke-width="0.55"/>
<line x1="220.00" y1="183.00" x2="220.00" y2="197.50" stroke="#00c800" stroke-width="0.75"/>
<rect x="219.10" y="185.30" width="1.8" height="7.20" fill="#003200" stroke="#00d200" stroke-width="0.55"/>
<line x1="223.75" y1="185.30" x2="223.75" y2="198.70" stroke="#00c800" stroke-width="0.75"/>
<rect x="222.75" y="185.80" width="2.0" height="12.50" fill="#ffffff" stroke="#5cff5c" stroke-width="0.4"/>
<line x1="227.50" y1="198.30" x2="227.50" y2="214.70" stroke="#00c800" stroke-width="0.75"/>
<rect x="226.50" y="198.70" width="2.0" height="13.80" fill="#ffffff" stroke="#5cff5c" stroke-width="0.4"/>
<line x1="231.25" y1="205.80" x2="231.25" y2="221.70" stroke="#00c800" stroke-width="0.75"/>
<rect x="230.25" y="210.80" width="2.0" height="10.00" fill="#ffffff" stroke="#5cff5c" stroke-width="0.4"/>
<line x1="235.00" y1="219.70" x2="235.00" y2="230.80" stroke="#00c800" stroke-width="0.75"/>
<rect x="234.00" y="220.30" width="2.0" height="7.20" fill="#ffffff" stroke="#5cff5c" stroke-width="0.4"/>
<line x1="238.75" y1="213.30" x2="238.75" y2="242.50" stroke="#00c800" stroke-width="0.75"/>
<rect x="237.75" y="225.30" width="2.0" height="17.20" fill="#ffffff" stroke="#5cff5c" stroke-width="0.4"/>
<line x1="242.50" y1="230.80" x2="242.50" y2="248.30" stroke="#00c800" stroke-width="0.75"/>
<rect x="241.50" y="242.50" width="2.0" height="1.20" fill="#ffffff" stroke="#5cff5c" stroke-width="0.4"/>
<line x1="246.25" y1="238.70" x2="246.25" y2="248.30" stroke="#00c800" stroke-width="0.75"/>
<rect x="245.35" y="240.80" width="1.8" height="2.90" fill="#003200" stroke="#00d200" stroke-width="0.55"/>
<line x1="250.00" y1="225.00" x2="250.00" y2="241.70" stroke="#00c800" stroke-width="0.75"/>
<rect x="249.10" y="231.70" width="1.8" height="9.10" fill="#003200" stroke="#00d200" stroke-width="0.55"/>
<line x1="253.75" y1="198.70" x2="253.75" y2="231.00" stroke="#00c800" stroke-width="0.75"/>
<rect x="252.85" y="203.00" width="1.8" height="27.50" fill="#003200" stroke="#00d200" stroke-width="0.55"/>
<line x1="257.50" y1="170.00" x2="257.50" y2="202.50" stroke="#00c800" stroke-width="0.75"/>
<rect x="256.60" y="188.30" width="1.8" height="13.70" fill="#003200" stroke="#00d200" stroke-width="0.55"/>
<line x1="261.25" y1="178.30" x2="261.25" y2="200.80" stroke="#00c800" stroke-width="0.75"/>
<rect x="260.25" y="188.70" width="2.0" height="3.30" fill="#ffffff" stroke="#5cff5c" stroke-width="0.4"/>
<line x1="265.00" y1="170.80" x2="265.00" y2="191.70" stroke="#00c800" stroke-width="0.75"/>
<rect x="264.10" y="179.20" width="1.8" height="12.10" fill="#003200" stroke="#00d200" stroke-width="0.55"/>
<line x1="268.75" y1="178.30" x2="268.75" y2="206.70" stroke="#00c800" stroke-width="0.75"/>
<rect x="267.75" y="179.20" width="2.0" height="20.80" fill="#ffffff" stroke="#5cff5c" stroke-width="0.4"/>
<line x1="272.50" y1="176.20" x2="272.50" y2="201.70" stroke="#00c800" stroke-width="0.75"/>
<rect x="271.60" y="176.70" width="1.8" height="24.60" fill="#003200" stroke="#00d200" stroke-width="0.55"/>
<line x1="276.25" y1="176.30" x2="276.25" y2="187.00" stroke="#00c800" stroke-width="0.75"/>
<rect x="275.25" y="176.70" width="2.0" height="10.00" fill="#ffffff" stroke="#5cff5c" stroke-width="0.4"/>
<line x1="280.00" y1="176.70" x2="280.00" y2="188.70" stroke="#00c800" stroke-width="0.75"/>
<rect x="279.10" y="180.80" width="1.8" height="4.20" fill="#003200" stroke="#00d200" stroke-width="0.55"/>
<line x1="283.75" y1="172.50" x2="283.75" y2="188.30" stroke="#00c800" stroke-width="0.75"/>
<rect x="282.75" y="179.20" width="2.0" height="4.10" fill="#ffffff" stroke="#5cff5c" stroke-width="0.4"/>
<line x1="287.50" y1="174.20" x2="287.50" y2="186.70" stroke="#00c800" stroke-width="0.75"/>
<rect x="286.60" y="176.30" width="1.8" height="5.40" fill="#003200" stroke="#00d200" stroke-width="0.55"/>
<line x1="291.25" y1="168.70" x2="291.25" y2="180.80" stroke="#00c800" stroke-width="0.75"/>
<rect x="290.35" y="172.50" width="1.8" height="3.30" fill="#003200" stroke="#00d200" stroke-width="0.55"/>
<line x1="295.00" y1="171.70" x2="295.00" y2="195.30" stroke="#00c800" stroke-width="0.75"/>
<rect x="294.00" y="172.50" width="2.0" height="22.50" fill="#ffffff" stroke="#5cff5c" stroke-width="0.4"/>
<line x1="298.75" y1="180.00" x2="298.75" y2="202.50" stroke="#00c800" stroke-width="0.75"/>
<rect x="297.85" y="183.30" width="1.8" height="10.90" fill="#003200" stroke="#00d200" stroke-width="0.55"/>
<line x1="302.50" y1="170.80" x2="302.50" y2="183.30" stroke="#00c800" stroke-width="0.75"/>
<rect x="301.60" y="171.70" width="1.8" height="11.30" fill="#003200" stroke="#00d200" stroke-width="0.55"/>
<line x1="306.25" y1="171.70" x2="306.25" y2="185.80" stroke="#00c800" stroke-width="0.75"/>
<rect x="305.25" y="172.00" width="2.0" height="12.70" fill="#ffffff" stroke="#5cff5c" stroke-width="0.4"/>
<line x1="310.00" y1="174.70" x2="310.00" y2="188.30" stroke="#00c800" stroke-width="0.75"/>
<rect x="309.10" y="175.30" width="1.8" height="3.90" fill="#003200" stroke="#00d200" stroke-width="0.55"/>
<line x1="313.75" y1="176.30" x2="313.75" y2="201.70" stroke="#00c800" stroke-width="0.75"/>
<rect x="312.75" y="176.70" width="2.0" height="14.60" fill="#ffffff" stroke="#5cff5c" stroke-width="0.4"/>
<line x1="317.50" y1="191.30" x2="317.50" y2="229.70" stroke="#00c800" stroke-width="0.75"/>
<rect x="316.50" y="191.70" width="2.0" height="37.50" fill="#ffffff" stroke="#5cff5c" stroke-width="0.4"/>
<line x1="321.25" y1="217.50" x2="321.25" y2="240.00" stroke="#00c800" stroke-width="0.75"/>
<rect x="320.25" y="227.50" width="2.0" height="2.20" fill="#ffffff" stroke="#5cff5c" stroke-width="0.4"/>
<line x1="325.00" y1="209.20" x2="325.00" y2="233.30" stroke="#00c800" stroke-width="0.75"/>
<rect x="324.10" y="210.30" width="1.8" height="18.90" fill="#003200" stroke="#00d200" stroke-width="0.55"/>
<line x1="328.75" y1="196.70" x2="328.75" y2="213.70" stroke="#00c800" stroke-width="0.75"/>
<rect x="327.75" y="204.00" width="2.0" height="9.00" fill="#ffffff" stroke="#5cff5c" stroke-width="0.4"/>
<line x1="332.50" y1="213.70" x2="332.50" y2="242.50" stroke="#00c800" stroke-width="0.75"/>
<rect x="331.50" y="214.70" width="2.0" height="27.80" fill="#ffffff" stroke="#5cff5c" stroke-width="0.4"/>
<line x1="336.25" y1="222.50" x2="336.25" y2="241.50" stroke="#00c800" stroke-width="0.75"/>
<rect x="335.35" y="225.80" width="1.8" height="15.00" fill="#003200" stroke="#00d200" stroke-width="0.55"/>
<line x1="340.00" y1="204.20" x2="340.00" y2="234.00" stroke="#00c800" stroke-width="0.75"/>
<rect x="339.10" y="210.80" width="1.8" height="15.90" fill="#003200" stroke="#00d200" stroke-width="0.55"/>
<line x1="343.75" y1="197.50" x2="343.75" y2="213.00" stroke="#00c800" stroke-width="0.75"/>
<rect x="342.85" y="200.80" width="1.8" height="11.70" fill="#003200" stroke="#00d200" stroke-width="0.55"/>
<line x1="347.50" y1="203.30" x2="347.50" y2="225.00" stroke="#00c800" stroke-width="0.75"/>
<rect x="346.50" y="204.20" width="2.0" height="13.30" fill="#ffffff" stroke="#5cff5c" stroke-width="0.4"/>
<line x1="351.25" y1="191.30" x2="351.25" y2="217.00" stroke="#00c800" stroke-width="0.75"/>
<rect x="350.35" y="200.00" width="1.8" height="15.80" fill="#003200" stroke="#00d200" stroke-width="0.55"/>
<line x1="355.00" y1="200.80" x2="355.00" y2="234.20" stroke="#00c800" stroke-width="0.75"/>
<rect x="354.00" y="201.30" width="2.0" height="26.20" fill="#ffffff" stroke="#5cff5c" stroke-width="0.4"/>
<line x1="358.75" y1="212.50" x2="358.75" y2="229.70" stroke="#00c800" stroke-width="0.75"/>
<rect x="357.85" y="215.80" width="1.8" height="13.40" fill="#003200" stroke="#00d200" stroke-width="0.55"/>
<line x1="362.50" y1="191.70" x2="362.50" y2="217.00" stroke="#00c800" stroke-width="0.75"/>
<rect x="361.60" y="192.20" width="1.8" height="24.50" fill="#003200" stroke="#00d200" stroke-width="0.55"/>
<line x1="366.25" y1="185.80" x2="366.25" y2="201.70" stroke="#00c800" stroke-width="0.75"/>
<rect x="365.35" y="186.70" width="1.8" height="6.60" fill="#003200" stroke="#00d200" stroke-width="0.55"/>
<line x1="370.00" y1="167.50" x2="370.00" y2="188.70" stroke="#00c800" stroke-width="0.75"/>
<rect x="369.10" y="181.30" width="1.8" height="7.00" fill="#003200" stroke="#00d200" stroke-width="0.55"/>
<line x1="373.75" y1="174.20" x2="373.75" y2="195.00" stroke="#00c800" stroke-width="0.75"/>
<rect x="372.75" y="180.30" width="2.0" height="14.40" fill="#ffffff" stroke="#5cff5c" stroke-width="0.4"/>
<line x1="377.50" y1="191.30" x2="377.50" y2="212.50" stroke="#00c800" stroke-width="0.75"/>
<rect x="376.50" y="195.00" width="2.0" height="11.70" fill="#ffffff" stroke="#5cff5c" stroke-width="0.4"/>
<line x1="381.25" y1="178.30" x2="381.25" y2="207.00" stroke="#00c800" stroke-width="0.75"/>
<rect x="380.35" y="183.30" width="1.8" height="23.40" fill="#003200" stroke="#00d200" stroke-width="0.55"/>
<line x1="385.00" y1="170.00" x2="385.00" y2="188.30" stroke="#00c800" stroke-width="0.75"/>
<rect x="384.10" y="171.30" width="1.8" height="12.90" fill="#003200" stroke="#00d200" stroke-width="0.55"/>
<line x1="388.75" y1="143.00" x2="388.75" y2="170.80" stroke="#00c800" stroke-width="0.75"/>
<rect x="387.85" y="143.30" width="1.8" height="27.00" fill="#003200" stroke="#00d200" stroke-width="0.55"/>
<line x1="392.50" y1="107.50" x2="392.50" y2="143.70" stroke="#00c800" stroke-width="0.75"/>
<rect x="391.60" y="110.30" width="1.8" height="33.00" fill="#003200" stroke="#00d200" stroke-width="0.55"/>
<line x1="396.25" y1="109.70" x2="396.25" y2="131.70" stroke="#00c800" stroke-width="0.75"/>
<rect x="395.25" y="110.80" width="2.0" height="12.70" fill="#ffffff" stroke="#5cff5c" stroke-width="0.4"/>
<line x1="400.00" y1="92.00" x2="400.00" y2="134.70" stroke="#00c800" stroke-width="0.75"/>
<rect x="399.10" y="97.50" width="1.8" height="27.50" fill="#003200" stroke="#00d200" stroke-width="0.55"/>
<line x1="403.75" y1="95.30" x2="403.75" y2="113.30" stroke="#00c800" stroke-width="0.75"/>
<rect x="402.85" y="95.80" width="1.8" height="1.70" fill="#003200" stroke="#00d200" stroke-width="0.55"/>
<line x1="407.50" y1="68.00" x2="407.50" y2="97.80" stroke="#00c800" stroke-width="0.75"/>
<rect x="406.60" y="68.30" width="1.8" height="29.20" fill="#003200" stroke="#00d200" stroke-width="0.55"/>
<line x1="411.25" y1="65.30" x2="411.25" y2="76.70" stroke="#00c800" stroke-width="0.75"/>
<rect x="410.25" y="66.70" width="2.0" height="9.10" fill="#ffffff" stroke="#5cff5c" stroke-width="0.4"/>
<line x1="415.00" y1="73.30" x2="415.00" y2="86.70" stroke="#00c800" stroke-width="0.75"/>
<rect x="414.00" y="75.00" width="2.0" height="9.20" fill="#ffffff" stroke="#5cff5c" stroke-width="0.4"/>
<line x1="418.75" y1="85.30" x2="418.75" y2="115.80" stroke="#00c800" stroke-width="0.75"/>
<rect x="417.75" y="88.00" width="2.0" height="27.00" fill="#ffffff" stroke="#5cff5c" stroke-width="0.4"/>
<line x1="422.50" y1="100.00" x2="422.50" y2="115.30" stroke="#00c800" stroke-width="0.75"/>
<rect x="421.50" y="113.30" width="2.0" height="1.70" fill="#ffffff" stroke="#5cff5c" stroke-width="0.4"/>
<line x1="426.25" y1="113.30" x2="426.25" y2="124.20" stroke="#00c800" stroke-width="0.75"/>
<rect x="425.25" y="115.00" width="2.0" height="8.70" fill="#ffffff" stroke="#5cff5c" stroke-width="0.4"/>
<line x1="430.00" y1="107.00" x2="430.00" y2="128.00" stroke="#00c800" stroke-width="0.75"/>
<rect x="429.10" y="108.00" width="1.8" height="16.70" fill="#003200" stroke="#00d200" stroke-width="0.55"/>
<line x1="433.75" y1="94.20" x2="433.75" y2="113.70" stroke="#00c800" stroke-width="0.75"/>
<rect x="432.75" y="107.00" width="2.0" height="6.30" fill="#ffffff" stroke="#5cff5c" stroke-width="0.4"/>
<line x1="437.50" y1="111.70" x2="437.50" y2="123.70" stroke="#00c800" stroke-width="0.75"/>
<rect x="436.60" y="112.50" width="1.8" height="0.80" fill="#003200" stroke="#00d200" stroke-width="0.55"/>
<line x1="441.25" y1="112.50" x2="441.25" y2="125.80" stroke="#00c800" stroke-width="0.75"/>
<rect x="440.25" y="113.30" width="2.0" height="11.70" fill="#ffffff" stroke="#5cff5c" stroke-width="0.4"/>
<line x1="445.00" y1="116.70" x2="445.00" y2="135.30" stroke="#00c800" stroke-width="0.75"/>
<rect x="444.10" y="120.30" width="1.8" height="6.00" fill="#003200" stroke="#00d200" stroke-width="0.55"/>
<line x1="448.75" y1="119.70" x2="448.75" y2="154.70" stroke="#00c800" stroke-width="0.75"/>
<rect x="447.75" y="120.30" width="2.0" height="33.90" fill="#ffffff" stroke="#5cff5c" stroke-width="0.4"/>
<line x1="452.50" y1="150.00" x2="452.50" y2="172.50" stroke="#00c800" stroke-width="0.75"/>
<rect x="451.50" y="153.00" width="2.0" height="1.70" fill="#ffffff" stroke="#5cff5c" stroke-width="0.4"/>
<line x1="456.25" y1="153.70" x2="456.25" y2="170.00" stroke="#00c800" stroke-width="0.75"/>
<rect x="455.25" y="155.30" width="2.0" height="8.40" fill="#ffffff" stroke="#5cff5c" stroke-width="0.4"/>
<line x1="460.00" y1="163.00" x2="460.00" y2="173.00" stroke="#00c800" stroke-width="0.75"/>
<rect x="459.10" y="163.50" width="1.8" height="0.70" fill="#003200" stroke="#00d200" stroke-width="0.55"/>
<line x1="463.75" y1="160.80" x2="463.75" y2="172.50" stroke="#00c800" stroke-width="0.75"/>
<rect x="462.75" y="162.00" width="2.0" height="6.70" fill="#ffffff" stroke="#5cff5c" stroke-width="0.4"/>
<line x1="467.50" y1="160.00" x2="467.50" y2="177.50" stroke="#00c800" stroke-width="0.75"/>
<rect x="466.60" y="160.80" width="1.8" height="7.50" fill="#003200" stroke="#00d200" stroke-width="0.55"/>
<line x1="471.25" y1="161.70" x2="471.25" y2="189.00" stroke="#00c800" stroke-width="0.75"/>
<rect x="470.25" y="162.50" width="2.0" height="26.20" fill="#ffffff" stroke="#5cff5c" stroke-width="0.4"/>
<line x1="475.00" y1="164.20" x2="475.00" y2="188.50" stroke="#00c800" stroke-width="0.75"/>
<rect x="474.00" y="185.80" width="2.0" height="2.50" fill="#ffffff" stroke="#5cff5c" stroke-width="0.4"/>
<line x1="478.75" y1="163.30" x2="478.75" y2="191.70" stroke="#00c800" stroke-width="0.75"/>
<rect x="477.85" y="176.50" width="1.8" height="11.80" fill="#003200" stroke="#00d200" stroke-width="0.55"/>
<line x1="482.50" y1="176.30" x2="482.50" y2="206.30" stroke="#00c800" stroke-width="0.75"/>
<rect x="481.50" y="176.70" width="2.0" height="25.80" fill="#ffffff" stroke="#5cff5c" stroke-width="0.4"/>
<line x1="486.25" y1="193.00" x2="486.25" y2="203.00" stroke="#00c800" stroke-width="0.75"/>
<rect x="485.35" y="193.70" width="1.8" height="8.80" fill="#003200" stroke="#00d200" stroke-width="0.55"/>
<line x1="490.00" y1="189.70" x2="490.00" y2="204.20" stroke="#00c800" stroke-width="0.75"/>
<rect x="489.10" y="190.30" width="1.8" height="1.70" fill="#003200" stroke="#00d200" stroke-width="0.55"/>
<line x1="493.75" y1="189.70" x2="493.75" y2="204.20" stroke="#00c800" stroke-width="0.75"/>
<rect x="492.75" y="190.30" width="2.0" height="9.70" fill="#ffffff" stroke="#5cff5c" stroke-width="0.4"/>
<line x1="497.50" y1="199.20" x2="497.50" y2="215.00" stroke="#00c800" stroke-width="0.75"/>
<rect x="496.50" y="200.30" width="2.0" height="14.40" fill="#ffffff" stroke="#5cff5c" stroke-width="0.4"/>
<line x1="501.25" y1="215.80" x2="501.25" y2="231.30" stroke="#00c800" stroke-width="0.75"/>
<rect x="500.25" y="216.30" width="2.0" height="14.50" fill="#ffffff" stroke="#5cff5c" stroke-width="0.4"/>
<line x1="505.00" y1="228.30" x2="505.00" y2="242.50" stroke="#00c800" stroke-width="0.75"/>
<rect x="504.00" y="228.70" width="2.0" height="2.10" fill="#ffffff" stroke="#5cff5c" stroke-width="0.4"/>
<line x1="508.75" y1="225.00" x2="508.75" y2="232.50" stroke="#00c800" stroke-width="0.75"/>
<rect x="507.75" y="228.70" width="2.0" height="3.30" fill="#ffffff" stroke="#5cff5c" stroke-width="0.4"/>
<line x1="512.50" y1="213.30" x2="512.50" y2="238.70" stroke="#00c800" stroke-width="0.75"/>
<rect x="511.60" y="214.70" width="1.8" height="18.60" fill="#003200" stroke="#00d200" stroke-width="0.55"/>
<line x1="516.25" y1="200.30" x2="516.25" y2="216.70" stroke="#00c800" stroke-width="0.75"/>
<rect x="515.35" y="212.50" width="1.8" height="3.80" fill="#003200" stroke="#00d200" stroke-width="0.55"/>
<line x1="520.00" y1="204.20" x2="520.00" y2="225.00" stroke="#00c800" stroke-width="0.75"/>
<rect x="519.00" y="208.00" width="2.0" height="7.80" fill="#ffffff" stroke="#5cff5c" stroke-width="0.4"/>
<line x1="523.75" y1="206.70" x2="523.75" y2="228.00" stroke="#00c800" stroke-width="0.75"/>
<rect x="522.75" y="214.70" width="2.0" height="12.80" fill="#ffffff" stroke="#5cff5c" stroke-width="0.4"/>
<line x1="527.50" y1="221.30" x2="527.50" y2="227.50" stroke="#00c800" stroke-width="0.75"/>
<rect x="526.60" y="224.30" width="1.8" height="0.70" fill="#003200" stroke="#00d200" stroke-width="0.55"/>
<line x1="531.25" y1="203.30" x2="531.25" y2="234.20" stroke="#00c800" stroke-width="0.75"/>
<rect x="530.35" y="205.30" width="1.8" height="21.70" fill="#003200" stroke="#00d200" stroke-width="0.55"/>
<line x1="535.00" y1="143.30" x2="535.00" y2="205.00" stroke="#00c800" stroke-width="0.75"/>
<rect x="534.10" y="147.50" width="1.8" height="57.20" fill="#003200" stroke="#00d200" stroke-width="0.55"/>
<line x1="538.75" y1="147.50" x2="538.75" y2="176.70" stroke="#00c800" stroke-width="0.75"/>
<rect x="537.75" y="148.00" width="2.0" height="25.70" fill="#ffffff" stroke="#5cff5c" stroke-width="0.4"/>
<line x1="542.50" y1="161.70" x2="542.50" y2="191.70" stroke="#00c800" stroke-width="0.75"/>
<rect x="541.60" y="162.50" width="1.8" height="13.00" fill="#003200" stroke="#00d200" stroke-width="0.55"/>
<line x1="546.25" y1="153.70" x2="546.25" y2="161.20" stroke="#00c800" stroke-width="0.75"/>
<rect x="545.25" y="158.70" width="2.0" height="2.10" fill="#ffffff" stroke="#5cff5c" stroke-width="0.4"/>
<line x1="550.00" y1="143.30" x2="550.00" y2="160.00" stroke="#00c800" stroke-width="0.75"/>
<rect x="549.10" y="144.70" width="1.8" height="14.80" fill="#003200" stroke="#00d200" stroke-width="0.55"/>
<line x1="553.75" y1="134.70" x2="553.75" y2="153.30" stroke="#00c800" stroke-width="0.75"/>
<rect x="552.75" y="140.80" width="2.0" height="12.20" fill="#ffffff" stroke="#5cff5c" stroke-width="0.4"/>
<line x1="557.50" y1="147.50" x2="557.50" y2="160.80" stroke="#00c800" stroke-width="0.75"/>
<rect x="556.50" y="154.20" width="2.0" height="5.00" fill="#ffffff" stroke="#5cff5c" stroke-width="0.4"/>
<line x1="561.25" y1="155.80" x2="561.25" y2="160.30" stroke="#00c800" stroke-width="0.75"/>
<rect x="560.35" y="159.20" width="1.8" height="0.80" fill="#003200" stroke="#00d200" stroke-width="0.55"/>
<line x1="565.00" y1="158.00" x2="565.00" y2="191.30" stroke="#00c800" stroke-width="0.75"/>
<rect x="564.00" y="158.30" width="2.0" height="20.40" fill="#ffffff" stroke="#5cff5c" stroke-width="0.4"/>
<line x1="568.75" y1="163.30" x2="568.75" y2="179.20" stroke="#00c800" stroke-width="0.75"/>
<rect x="567.85" y="165.80" width="1.8" height="12.50" fill="#003200" stroke="#00d200" stroke-width="0.55"/>
<line x1="572.50" y1="160.80" x2="572.50" y2="167.80" stroke="#00c800" stroke-width="0.75"/>
<rect x="571.60" y="165.80" width="1.8" height="1.70" fill="#003200" stroke="#00d200" stroke-width="0.55"/>
<line x1="576.25" y1="158.30" x2="576.25" y2="167.80" stroke="#00c800" stroke-width="0.75"/>
<rect x="575.25" y="164.20" width="2.0" height="3.30" fill="#ffffff" stroke="#5cff5c" stroke-width="0.4"/>
<line x1="580.00" y1="165.30" x2="580.00" y2="189.20" stroke="#00c800" stroke-width="0.75"/>
<rect x="579.00" y="165.80" width="2.0" height="22.90" fill="#ffffff" stroke="#5cff5c" stroke-width="0.4"/>
<line x1="583.75" y1="185.80" x2="583.75" y2="202.50" stroke="#00c800" stroke-width="0.75"/>
<rect x="582.75" y="189.20" width="2.0" height="11.60" fill="#ffffff" stroke="#5cff5c" stroke-width="0.4"/>
<line x1="587.50" y1="193.70" x2="587.50" y2="215.30" stroke="#00c800" stroke-width="0.75"/>
<rect x="586.50" y="198.70" width="2.0" height="16.00" fill="#ffffff" stroke="#5cff5c" stroke-width="0.4"/>
<line x1="591.25" y1="208.30" x2="591.25" y2="217.50" stroke="#00c800" stroke-width="0.75"/>
<rect x="590.35" y="212.00" width="1.8" height="2.20" fill="#003200" stroke="#00d200" stroke-width="0.55"/>
<line x1="595.00" y1="202.50" x2="595.00" y2="215.80" stroke="#00c800" stroke-width="0.75"/>
<rect x="594.10" y="203.00" width="1.8" height="11.20" fill="#003200" stroke="#00d200" stroke-width="0.55"/>
<line x1="598.75" y1="186.30" x2="598.75" y2="205.00" stroke="#00c800" stroke-width="0.75"/>
<rect x="597.85" y="187.00" width="1.8" height="17.70" fill="#003200" stroke="#00d200" stroke-width="0.55"/>
<line x1="602.50" y1="188.00" x2="602.50" y2="191.30" stroke="#00c800" stroke-width="0.75"/>
<rect x="601.50" y="188.70" width="2.0" height="2.10" fill="#ffffff" stroke="#5cff5c" stroke-width="0.4"/>
<line x1="606.25" y1="184.20" x2="606.25" y2="198.30" stroke="#00c800" stroke-width="0.75"/>
<rect x="605.25" y="190.00" width="2.0" height="8.00" fill="#ffffff" stroke="#5cff5c" stroke-width="0.4"/>
<line x1="610.00" y1="185.30" x2="610.00" y2="204.70" stroke="#00c800" stroke-width="0.75"/>
<rect x="609.00" y="198.00" width="2.0" height="2.00" fill="#ffffff" stroke="#5cff5c" stroke-width="0.4"/>
<line x1="613.75" y1="170.80" x2="613.75" y2="203.30" stroke="#00c800" stroke-width="0.75"/>
<rect x="612.85" y="185.30" width="1.8" height="12.20" fill="#003200" stroke="#00d200" stroke-width="0.55"/>
<line x1="617.50" y1="165.80" x2="617.50" y2="192.00" stroke="#00c800" stroke-width="0.75"/>
<rect x="616.50" y="185.30" width="2.0" height="1.70" fill="#ffffff" stroke="#5cff5c" stroke-width="0.4"/>
<line x1="621.25" y1="160.80" x2="621.25" y2="192.50" stroke="#00c800" stroke-width="0.75"/>
<rect x="620.35" y="163.00" width="1.8" height="22.30" fill="#003200" stroke="#00d200" stroke-width="0.55"/>
<line x1="625.00" y1="165.30" x2="625.00" y2="187.50" stroke="#00c800" stroke-width="0.75"/>
<rect x="624.00" y="165.80" width="2.0" height="9.20" fill="#ffffff" stroke="#5cff5c" stroke-width="0.4"/>
<line x1="628.75" y1="170.00" x2="628.75" y2="192.50" stroke="#00c800" stroke-width="0.75"/>
<rect x="627.75" y="174.20" width="2.0" height="15.80" fill="#ffffff" stroke="#5cff5c" stroke-width="0.4"/>
<line x1="632.50" y1="177.00" x2="632.50" y2="191.70" stroke="#00c800" stroke-width="0.75"/>
<rect x="631.60" y="177.50" width="1.8" height="13.80" fill="#003200" stroke="#00d200" stroke-width="0.55"/>
<line x1="636.25" y1="173.00" x2="636.25" y2="189.20" stroke="#00c800" stroke-width="0.75"/>
<rect x="635.35" y="173.70" width="1.8" height="6.60" fill="#003200" stroke="#00d200" stroke-width="0.55"/>
<line x1="640.00" y1="163.00" x2="640.00" y2="177.00" stroke="#00c800" stroke-width="0.75"/>
<rect x="639.10" y="165.30" width="1.8" height="8.40" fill="#003200" stroke="#00d200" stroke-width="0.55"/>
<line x1="643.75" y1="160.30" x2="643.75" y2="193.70" stroke="#00c800" stroke-width="0.75"/>
<rect x="642.75" y="164.70" width="2.0" height="25.30" fill="#ffffff" stroke="#5cff5c" stroke-width="0.4"/>
<line x1="647.50" y1="187.50" x2="647.50" y2="215.00" stroke="#00c800" stroke-width="0.75"/>
<rect x="646.50" y="188.30" width="2.0" height="25.20" fill="#ffffff" stroke="#5cff5c" stroke-width="0.4"/>
<line x1="651.25" y1="200.00" x2="651.25" y2="219.50" stroke="#00c800" stroke-width="0.75"/>
<rect x="650.35" y="201.30" width="1.8" height="7.40" fill="#003200" stroke="#00d200" stroke-width="0.55"/>
<line x1="655.00" y1="198.70" x2="655.00" y2="230.80" stroke="#00c800" stroke-width="0.75"/>
<rect x="654.10" y="199.70" width="1.8" height="2.00" fill="#003200" stroke="#00d200" stroke-width="0.55"/>
<line x1="658.75" y1="193.70" x2="658.75" y2="204.20" stroke="#00c800" stroke-width="0.75"/>
<rect x="657.75" y="200.00" width="2.0" height="3.30" fill="#ffffff" stroke="#5cff5c" stroke-width="0.4"/>
<line x1="662.50" y1="173.30" x2="662.50" y2="202.00" stroke="#00c800" stroke-width="0.75"/>
<rect x="661.60" y="173.70" width="1.8" height="28.00" fill="#003200" stroke="#00d200" stroke-width="0.55"/>
<line x1="666.25" y1="160.80" x2="666.25" y2="189.20" stroke="#00c800" stroke-width="0.75"/>
<rect x="665.35" y="163.00" width="1.8" height="9.50" fill="#003200" stroke="#00d200" stroke-width="0.55"/>
<line x1="670.00" y1="160.80" x2="670.00" y2="174.20" stroke="#00c800" stroke-width="0.75"/>
<rect x="669.00" y="163.30" width="2.0" height="1.40" fill="#ffffff" stroke="#5cff5c" stroke-width="0.4"/>
<line x1="673.75" y1="162.00" x2="673.75" y2="182.00" stroke="#00c800" stroke-width="0.75"/>
<rect x="672.75" y="164.70" width="2.0" height="17.00" fill="#ffffff" stroke="#5cff5c" stroke-width="0.4"/>
<line x1="677.50" y1="175.30" x2="677.50" y2="182.00" stroke="#00c800" stroke-width="0.75"/>
<rect x="676.50" y="180.00" width="2.0" height="1.70" fill="#ffffff" stroke="#5cff5c" stroke-width="0.4"/>
<line x1="681.25" y1="180.80" x2="681.25" y2="202.00" stroke="#00c800" stroke-width="0.75"/>
<rect x="680.25" y="181.70" width="2.0" height="7.00" fill="#ffffff" stroke="#5cff5c" stroke-width="0.4"/>
<line x1="685.00" y1="188.00" x2="685.00" y2="193.00" stroke="#00c800" stroke-width="0.75"/>
<rect x="684.00" y="188.30" width="2.0" height="4.20" fill="#ffffff" stroke="#5cff5c" stroke-width="0.4"/>
<line x1="688.75" y1="176.70" x2="688.75" y2="192.80" stroke="#00c800" stroke-width="0.75"/>
<rect x="687.85" y="177.00" width="1.8" height="15.50" fill="#003200" stroke="#00d200" stroke-width="0.55"/>
<line x1="692.50" y1="166.70" x2="692.50" y2="190.00" stroke="#00c800" stroke-width="0.75"/>
<rect x="691.50" y="176.70" width="2.0" height="13.00" fill="#ffffff" stroke="#5cff5c" stroke-width="0.4"/>
<line x1="696.25" y1="178.20" x2="696.25" y2="200.60" stroke="#00c800" stroke-width="0.75"/>
<rect x="695.25" y="186.80" width="2.0" height="4.70" fill="#ffffff" stroke="#5cff5c" stroke-width="0.4"/>
<line x1="700.00" y1="187.30" x2="700.00" y2="203.50" stroke="#00c800" stroke-width="0.75"/>
<rect x="699.00" y="192.30" width="2.0" height="10.80" fill="#ffffff" stroke="#5cff5c" stroke-width="0.4"/>
<line x1="703.75" y1="188.20" x2="703.75" y2="202.30" stroke="#00c800" stroke-width="0.75"/>
<rect x="702.85" y="191.20" width="1.8" height="10.60" fill="#003200" stroke="#00d200" stroke-width="0.55"/>
<line x1="707.50" y1="186.80" x2="707.50" y2="203.50" stroke="#00c800" stroke-width="0.75"/>
<rect x="706.60" y="187.30" width="1.8" height="2.50" fill="#003200" stroke="#00d200" stroke-width="0.55"/>
<line x1="711.25" y1="184.00" x2="711.25" y2="204.80" stroke="#00c800" stroke-width="0.75"/>
<rect x="710.25" y="188.50" width="2.0" height="15.90" fill="#ffffff" stroke="#5cff5c" stroke-width="0.4"/>
<line x1="715.00" y1="197.30" x2="715.00" y2="213.00" stroke="#00c800" stroke-width="0.75"/>
<rect x="714.00" y="204.40" width="2.0" height="3.70" fill="#ffffff" stroke="#5cff5c" stroke-width="0.4"/>
<line x1="718.75" y1="192.30" x2="718.75" y2="214.40" stroke="#00c800" stroke-width="0.75"/>
<rect x="717.85" y="194.80" width="1.8" height="16.30" fill="#003200" stroke="#00d200" stroke-width="0.55"/>
</g>
<line x1="724.70" y1="50.60" x2="724.70" y2="262.00" stroke="#d0d0d0" stroke-width="0.7" />
<line x1="96.30" y1="50.70" x2="724.70" y2="50.70" stroke="#b4b4b4" stroke-width="0.7" />
<line x1="96.30" y1="262.00" x2="724.70" y2="262.00" stroke="#d0d0d0" stroke-width="0.7" />
<line x1="96.30" y1="50.60" x2="96.30" y2="262.00" stroke="#9a9a9a" stroke-width="0.5" />
<line x1="724.70" y1="64.60" x2="726.40" y2="64.60" stroke="#d0d0d0" stroke-width="0.6" />
<text  x="727.40" y="66.48" font-size="4.94" fill="#d2d2d2" textLength="14.80" lengthAdjust="spacingAndGlyphs" >0.75280</text>
<line x1="724.70" y1="84.32" x2="726.40" y2="84.32" stroke="#d0d0d0" stroke-width="0.6" />
<text  x="727.40" y="86.20" font-size="4.94" fill="#d2d2d2" textLength="14.80" lengthAdjust="spacingAndGlyphs" >0.75265</text>
<line x1="724.70" y1="104.04" x2="726.40" y2="104.04" stroke="#d0d0d0" stroke-width="0.6" />
<text  x="727.40" y="105.92" font-size="4.94" fill="#d2d2d2" textLength="14.80" lengthAdjust="spacingAndGlyphs" >0.75250</text>
<line x1="724.70" y1="123.76" x2="726.40" y2="123.76" stroke="#d0d0d0" stroke-width="0.6" />
<text  x="727.40" y="125.64" font-size="4.94" fill="#d2d2d2" textLength="14.80" lengthAdjust="spacingAndGlyphs" >0.75235</text>
<line x1="724.70" y1="143.48" x2="726.40" y2="143.48" stroke="#d0d0d0" stroke-width="0.6" />
<text  x="727.40" y="145.36" font-size="4.94" fill="#d2d2d2" textLength="14.80" lengthAdjust="spacingAndGlyphs" >0.75220</text>
<line x1="724.70" y1="163.20" x2="726.40" y2="163.20" stroke="#d0d0d0" stroke-width="0.6" />
<text  x="727.40" y="165.08" font-size="4.94" fill="#d2d2d2" textLength="14.80" lengthAdjust="spacingAndGlyphs" >0.75205</text>
<line x1="724.70" y1="182.92" x2="726.40" y2="182.92" stroke="#d0d0d0" stroke-width="0.6" />
<text  x="727.40" y="184.80" font-size="4.94" fill="#d2d2d2" textLength="14.80" lengthAdjust="spacingAndGlyphs" >0.75190</text>
<line x1="724.70" y1="202.64" x2="726.40" y2="202.64" stroke="#d0d0d0" stroke-width="0.6" />
<text  x="727.40" y="204.52" font-size="4.94" fill="#d2d2d2" textLength="14.80" lengthAdjust="spacingAndGlyphs" >0.75175</text>
<line x1="724.70" y1="222.36" x2="726.40" y2="222.36" stroke="#d0d0d0" stroke-width="0.6" />
<text  x="727.40" y="224.24" font-size="4.94" fill="#d2d2d2" textLength="14.80" lengthAdjust="spacingAndGlyphs" >0.75160</text>
<line x1="724.70" y1="242.08" x2="726.40" y2="242.08" stroke="#d0d0d0" stroke-width="0.6" />
<text  x="727.40" y="243.96" font-size="4.94" fill="#d2d2d2" textLength="14.80" lengthAdjust="spacingAndGlyphs" >0.75145</text>
<rect x="726.00" y="192.80" width="17.90" height="4.60" fill="#b4c4d8" />
<text  x="727.40" y="196.94" font-size="4.84" fill="#0a0a0a" textLength="14.80" lengthAdjust="spacingAndGlyphs" stroke="#0a0a0a" stroke-width="0.08" >0.75181</text>
<line x1="96.25" y1="262.00" x2="96.25" y2="263.60" stroke="#d0d0d0" stroke-width="0.6" />
<text  x="96.65" y="268.04" font-size="4.84" fill="#e0e0e0" textLength="21.20" lengthAdjust="spacingAndGlyphs" >7 Dec 2017</text>
<line x1="126.25" y1="262.00" x2="126.25" y2="263.60" stroke="#d0d0d0" stroke-width="0.6" />
<text  x="126.65" y="268.04" font-size="4.84" fill="#e0e0e0" textLength="22.80" lengthAdjust="spacingAndGlyphs" >7 Dec 14:44</text>
<line x1="156.25" y1="262.00" x2="156.25" y2="263.60" stroke="#d0d0d0" stroke-width="0.6" />
<text  x="156.65" y="268.04" font-size="4.84" fill="#e0e0e0" textLength="22.80" lengthAdjust="spacingAndGlyphs" >7 Dec 14:52</text>
<line x1="186.25" y1="262.00" x2="186.25" y2="263.60" stroke="#d0d0d0" stroke-width="0.6" />
<text  x="186.65" y="268.04" font-size="4.84" fill="#e0e0e0" textLength="22.80" lengthAdjust="spacingAndGlyphs" >7 Dec 15:00</text>
<line x1="216.25" y1="262.00" x2="216.25" y2="263.60" stroke="#d0d0d0" stroke-width="0.6" />
<text  x="216.65" y="268.04" font-size="4.84" fill="#e0e0e0" textLength="22.80" lengthAdjust="spacingAndGlyphs" >7 Dec 15:08</text>
<line x1="246.25" y1="262.00" x2="246.25" y2="263.60" stroke="#d0d0d0" stroke-width="0.6" />
<text  x="246.65" y="268.04" font-size="4.84" fill="#e0e0e0" textLength="22.80" lengthAdjust="spacingAndGlyphs" >7 Dec 15:16</text>
<line x1="276.25" y1="262.00" x2="276.25" y2="263.60" stroke="#d0d0d0" stroke-width="0.6" />
<text  x="276.65" y="268.04" font-size="4.84" fill="#e0e0e0" textLength="22.80" lengthAdjust="spacingAndGlyphs" >7 Dec 15:24</text>
<line x1="306.25" y1="262.00" x2="306.25" y2="263.60" stroke="#d0d0d0" stroke-width="0.6" />
<text  x="306.65" y="268.04" font-size="4.84" fill="#e0e0e0" textLength="22.80" lengthAdjust="spacingAndGlyphs" >7 Dec 15:32</text>
<line x1="336.25" y1="262.00" x2="336.25" y2="263.60" stroke="#d0d0d0" stroke-width="0.6" />
<text  x="336.65" y="268.04" font-size="4.84" fill="#e0e0e0" textLength="22.80" lengthAdjust="spacingAndGlyphs" >7 Dec 15:40</text>
<line x1="366.25" y1="262.00" x2="366.25" y2="263.60" stroke="#d0d0d0" stroke-width="0.6" />
<text  x="366.65" y="268.04" font-size="4.84" fill="#e0e0e0" textLength="22.80" lengthAdjust="spacingAndGlyphs" >7 Dec 15:48</text>
<line x1="396.25" y1="262.00" x2="396.25" y2="263.60" stroke="#d0d0d0" stroke-width="0.6" />
<text  x="396.65" y="268.04" font-size="4.84" fill="#e0e0e0" textLength="22.80" lengthAdjust="spacingAndGlyphs" >7 Dec 15:56</text>
<line x1="426.25" y1="262.00" x2="426.25" y2="263.60" stroke="#d0d0d0" stroke-width="0.6" />
<text  x="426.65" y="268.04" font-size="4.84" fill="#e0e0e0" textLength="22.80" lengthAdjust="spacingAndGlyphs" >7 Dec 16:04</text>
<line x1="456.25" y1="262.00" x2="456.25" y2="263.60" stroke="#d0d0d0" stroke-width="0.6" />
<text  x="456.65" y="268.04" font-size="4.84" fill="#e0e0e0" textLength="22.80" lengthAdjust="spacingAndGlyphs" >7 Dec 16:12</text>
<line x1="486.25" y1="262.00" x2="486.25" y2="263.60" stroke="#d0d0d0" stroke-width="0.6" />
<text  x="486.65" y="268.04" font-size="4.84" fill="#e0e0e0" textLength="22.80" lengthAdjust="spacingAndGlyphs" >7 Dec 16:20</text>
<line x1="516.25" y1="262.00" x2="516.25" y2="263.60" stroke="#d0d0d0" stroke-width="0.6" />
<text  x="516.65" y="268.04" font-size="4.84" fill="#e0e0e0" textLength="22.80" lengthAdjust="spacingAndGlyphs" >7 Dec 16:28</text>
<line x1="546.25" y1="262.00" x2="546.25" y2="263.60" stroke="#d0d0d0" stroke-width="0.6" />
<text  x="546.65" y="268.04" font-size="4.84" fill="#e0e0e0" textLength="22.80" lengthAdjust="spacingAndGlyphs" >7 Dec 16:36</text>
<line x1="576.25" y1="262.00" x2="576.25" y2="263.60" stroke="#d0d0d0" stroke-width="0.6" />
<text  x="576.65" y="268.04" font-size="4.84" fill="#e0e0e0" textLength="22.80" lengthAdjust="spacingAndGlyphs" >7 Dec 16:44</text>
<line x1="606.25" y1="262.00" x2="606.25" y2="263.60" stroke="#d0d0d0" stroke-width="0.6" />
<text  x="606.65" y="268.04" font-size="4.84" fill="#e0e0e0" textLength="22.80" lengthAdjust="spacingAndGlyphs" >7 Dec 16:52</text>
<line x1="636.25" y1="262.00" x2="636.25" y2="263.60" stroke="#d0d0d0" stroke-width="0.6" />
<text  x="636.65" y="268.04" font-size="4.84" fill="#e0e0e0" textLength="22.80" lengthAdjust="spacingAndGlyphs" >7 Dec 17:00</text>
<line x1="666.25" y1="262.00" x2="666.25" y2="263.60" stroke="#d0d0d0" stroke-width="0.6" />
<text  x="666.65" y="268.04" font-size="4.84" fill="#e0e0e0" textLength="22.80" lengthAdjust="spacingAndGlyphs" >7 Dec 17:08</text>
<line x1="696.25" y1="262.00" x2="696.25" y2="263.60" stroke="#d0d0d0" stroke-width="0.6" />
<text  x="696.65" y="268.04" font-size="4.84" fill="#e0e0e0" textLength="22.80" lengthAdjust="spacingAndGlyphs" >7 Dec 17:16</text>
<rect x="98.00" y="53.00" width="6.60" height="5.30" fill="#e9dfe8" />
<line x1="100.20" y1="53.00" x2="100.20" y2="58.30" stroke="#d04050" stroke-width="0.9" />
<line x1="102.20" y1="53.00" x2="102.20" y2="58.30" stroke="#5060d0" stroke-width="0.9" />
<rect x="105.80" y="53.00" width="6.60" height="5.30" fill="#d83838" />
<rect x="105.80" y="53.00" width="3.00" height="3.00" fill="#4058d8" />
<line x1="109.40" y1="53.40" x2="109.40" y2="58.00" stroke="#f0d0d0" stroke-width="0.8" />
<text  x="115.00" y="57.53" font-size="5.36" fill="#f0f0f0" textLength="37.50" lengthAdjust="spacingAndGlyphs" stroke="#f0f0f0" stroke-width="0.12" >AUDUSDmicro,M1</text>
<text  x="696.70" y="57.65" font-size="5.15" fill="#f0f0f0" textLength="18.30" lengthAdjust="spacingAndGlyphs" stroke="#f0f0f0" stroke-width="0.12" >IlanisMT5</text>
<path d="M718.0 53.0 L720.2 51.2 L722.4 53.0 Z" fill="#e6e6e6"/><circle cx="720.2" cy="54.4" r="1.5" fill="#ecd2b4"/><circle cx="719.2" cy="57.0" r="2.0" fill="#3f86e0"/>
<circle cx="722.1" cy="56.7" r="2.0" fill="#e8321e"/>
<rect x="721.40" y="56.00" width="1.40" height="1.40" fill="#ffffff" />
<rect x="125.80" y="63.80" width="66.20" height="84.50" fill="#f0f0f0" />
<text  x="129.00" y="72.62" font-size="7.0" fill="#48486a" textLength="26.00" lengthAdjust="spacingAndGlyphs" stroke="#48486a" stroke-width="0.25" >IlanisMT5</text>
<line x1="174.00" y1="72.20" x2="179.00" y2="72.20" stroke="#8a8a96" stroke-width="0.9" />
<path d="M183.5 67.8 L187.3 71.8 M187.3 67.8 L183.5 71.8" stroke="#8c8c9a" stroke-width="1.1"/>
<rect x="128.30" y="75.50" width="60.90" height="69.80" fill="#808080" />
<line x1="128.30" y1="88.80" x2="189.20" y2="88.80" stroke="#ffffff" stroke-width="0.75" stroke-dasharray="1.6 0.9"/>
<line x1="128.30" y1="102.40" x2="189.20" y2="102.40" stroke="#ffffff" stroke-width="0.75" stroke-dasharray="1.6 0.9"/>
<line x1="128.30" y1="116.60" x2="189.20" y2="116.60" stroke="#ffffff" stroke-width="0.75" stroke-dasharray="1.6 0.9"/>
<line x1="128.30" y1="130.80" x2="189.20" y2="130.80" stroke="#ffffff" stroke-width="0.75" stroke-dasharray="1.6 0.9"/>
<circle cx="138.6" cy="82.6" r="4.3" fill="none" stroke="#f4f4f4" stroke-width="0.7"/>
<path d="M138.6 79.6 V82.8 H136.2" fill="none" stroke="#f4f4f4" stroke-width="0.7"/>
<text  x="146.70" y="86.11" font-size="9.48" fill="#ffffff" textLength="22.50" lengthAdjust="spacingAndGlyphs" stroke="#ffffff" stroke-width="0.12" >00:14</text>
<text  x="129.20" y="99.41" font-size="9.48" fill="#ffffff" textLength="47.10" lengthAdjust="spacingAndGlyphs" stroke="#ffffff" stroke-width="0.12" >No position</text>
<text  x="129.20" y="113.41" font-size="9.48" fill="#ffffff" textLength="54.10" lengthAdjust="spacingAndGlyphs" stroke="#ffffff" stroke-width="0.12" >№: 1000-1031</text>
<text  x="129.20" y="127.61" font-size="9.48" fill="#ffffff" textLength="22.80" lengthAdjust="spacingAndGlyphs" stroke="#ffffff" stroke-width="0.12" >$: 0.0</text>
<circle cx="134.2" cy="138.3" r="4.6" fill="none" stroke="#f4f4f4" stroke-width="0.7"/>
<circle cx="132.5" cy="137.2" r="0.7" fill="#f4f4f4"/><circle cx="135.9" cy="137.2" r="0.7" fill="#f4f4f4"/>
<path d="M131.8 141 Q134.2 138.6 136.6 141" fill="none" stroke="#f4f4f4" stroke-width="0.7"/>
<path d="M142.2 137.6 Q142.6 135.4 144.4 134.8 Q144.2 136.6 145.6 137.4 Q147.6 138.6 147.4 140.4 Q147 142.2 144.8 142.2 Q142 142 142.2 137.6 Z" fill="#b9b9b9" stroke="#e8e8e8" stroke-width="0.5"/>
<path d="M157.8 134.2 L158.9 137.3 L162.2 137.4 L159.6 139.4 L160.5 142.6 L157.8 140.7 L155.1 142.6 L156 139.4 L153.4 137.4 L156.7 137.3 Z" fill="#ffffff"/>
<rect x="94.80" y="271.70" width="661.20" height="11.60" fill="#f0f0f0" />
<line x1="94.80" y1="271.90" x2="756.00" y2="271.90" stroke="#4a4a4a" stroke-width="0.7" />
<path d="M96.3 271.6 V280.6 Q96.3 281.7 97.5 281.7 H151.4 Q152.6 281.7 152.6 280.6 V271.6" fill="#ffffff" stroke="#3c3c3c" stroke-width="0.8"/>
<text  x="101.30" y="279.41" font-size="6.7" fill="#1a1a1a" textLength="44.50" lengthAdjust="spacingAndGlyphs" stroke="#1a1a1a" stroke-width="0.12" >AUDUSDmicro,M1</text>
<text  x="158.00" y="279.41" font-size="6.7" fill="#9a9a9a" textLength="45.00" lengthAdjust="spacingAndGlyphs" stroke="#9a9a9a" stroke-width="0.12" >USDCADmicro,M1</text>
<line x1="209.20" y1="273.80" x2="209.20" y2="280.00" stroke="#8a8a8a" stroke-width="0.6" />
<path d="M734.6 275.4 L732.4 277 L734.6 278.6 Z" fill="#555"/><path d="M742 275.4 L744.2 277 L742 278.6 Z" fill="#555"/>
<line x1="-6.00" y1="283.80" x2="756.00" y2="283.80" stroke="#c4c4c4" stroke-width="0.6" />
<rect x="-6.00" y="284.30" width="13.20" height="125.50" fill="url(#gs)" />
<rect x="-6.00" y="284.30" width="13.20" height="7.40" fill="#f0f0f0" />
<path d="M2.2 285.6 L4.8 288.4 M4.8 285.6 L2.2 288.4" stroke="#111" stroke-width="0.9"/>
<text transform="translate(5.7,408.4) rotate(-90)" font-size="5.6" font-weight="bold" fill="#1f2d48" textLength="26.4" lengthAdjust="spacingAndGlyphs">BoxAttrezzi</text>
<rect x="7.20" y="284.60" width="733.40" height="114.00" fill="#ffffff" />
<rect x="7.20" y="284.60" width="733.40" height="10.60" fill="url(#gh)" />
<line x1="7.20" y1="295.30" x2="740.60" y2="295.30" stroke="#dedede" stroke-width="0.6" />
<text  x="11.00" y="292.41" font-size="6.7" fill="#222" textLength="8.30" lengthAdjust="spacingAndGlyphs" stroke="#222" stroke-width="0.12" >Ora</text>
<text  x="85.80" y="292.41" font-size="6.7" fill="#222" textLength="21.20" lengthAdjust="spacingAndGlyphs" stroke="#222" stroke-width="0.12" >Sorgente</text>
<text  x="170.30" y="292.41" font-size="6.7" fill="#222" textLength="26.00" lengthAdjust="spacingAndGlyphs" stroke="#222" stroke-width="0.12" >Messaggio</text>
<circle cx="12.3" cy="300.38" r="1.3" fill="#f4f4f4" stroke="#707070" stroke-width="0.65"/>
<text  x="17.70" y="302.35" font-size="6.18" fill="#2a2424" textLength="55.60" lengthAdjust="spacingAndGlyphs" stroke="#2a2424" stroke-width="0.12" >2017.12.07 16:18:11.596</text>
<text  x="84.00" y="302.35" font-size="6.18" fill="#2a2424" textLength="74.80" lengthAdjust="spacingAndGlyphs" stroke="#2a2424" stroke-width="0.12" >IlanisMT5 (AUDUSDmicro,M1)</text>
<text class="m" x="168.60" y="302.43" font-size="5.5" fill="#303030" textLength="278.97" lengthAdjust="spacingAndGlyphs" stroke="#303030" stroke-width="0.04" >IlanisMT5: SellPositionOpen(): Incorrect data for the structure of the trade request!</text>
<rect x="7.20" y="304.96" width="733.40" height="9.36" fill="#ebebeb" />
<circle cx="12.3" cy="309.74" r="1.3" fill="#f4f4f4" stroke="#707070" stroke-width="0.65"/>
<text  x="17.70" y="311.71" font-size="6.18" fill="#2a2424" textLength="55.60" lengthAdjust="spacingAndGlyphs" stroke="#2a2424" stroke-width="0.12" >2017.12.07 16:18:11.596</text>
<text  x="84.00" y="311.71" font-size="6.18" fill="#2a2424" textLength="74.80" lengthAdjust="spacingAndGlyphs" stroke="#2a2424" stroke-width="0.12" >IlanisMT5 (AUDUSDmicro,M1)</text>
<text class="m" x="168.60" y="311.79" font-size="5.5" fill="#303030" textLength="374.15" lengthAdjust="spacingAndGlyphs" stroke="#303030" stroke-width="0.04" >IlanisMT5: SellPositionOpen(): OrderCheck(): An unsupported type of execution of the remainder order is indicated.</text>
<circle cx="12.3" cy="319.10" r="1.3" fill="#f4f4f4" stroke="#707070" stroke-width="0.65"/>
<text  x="17.70" y="321.07" font-size="6.18" fill="#2a2424" textLength="55.60" lengthAdjust="spacingAndGlyphs" stroke="#2a2424" stroke-width="0.12" >2017.12.07 16:18:11.698</text>
<text  x="84.00" y="321.07" font-size="6.18" fill="#2a2424" textLength="74.80" lengthAdjust="spacingAndGlyphs" stroke="#2a2424" stroke-width="0.12" >IlanisMT5 (AUDUSDmicro,M1)</text>
<text class="m" x="168.60" y="321.15" font-size="5.5" fill="#303030" textLength="278.97" lengthAdjust="spacingAndGlyphs" stroke="#303030" stroke-width="0.04" >IlanisMT5: SellPositionOpen(): Incorrect data for the structure of the trade request!</text>
<rect x="7.20" y="323.68" width="733.40" height="9.36" fill="#ebebeb" />
<circle cx="12.3" cy="328.46" r="1.3" fill="#f4f4f4" stroke="#707070" stroke-width="0.65"/>
<text  x="17.70" y="330.43" font-size="6.18" fill="#2a2424" textLength="55.60" lengthAdjust="spacingAndGlyphs" stroke="#2a2424" stroke-width="0.12" >2017.12.07 16:18:11.698</text>
<text  x="84.00" y="330.43" font-size="6.18" fill="#2a2424" textLength="74.80" lengthAdjust="spacingAndGlyphs" stroke="#2a2424" stroke-width="0.12" >IlanisMT5 (AUDUSDmicro,M1)</text>
<text class="m" x="168.60" y="330.51" font-size="5.5" fill="#303030" textLength="374.15" lengthAdjust="spacingAndGlyphs" stroke="#303030" stroke-width="0.04" >IlanisMT5: SellPositionOpen(): OrderCheck(): An unsupported type of execution of the remainder order is indicated.</text>
<circle cx="12.3" cy="337.82" r="1.3" fill="#f4f4f4" stroke="#707070" stroke-width="0.65"/>
<text  x="17.70" y="339.79" font-size="6.18" fill="#2a2424" textLength="55.60" lengthAdjust="spacingAndGlyphs" stroke="#2a2424" stroke-width="0.12" >2017.12.07 16:18:11.811</text>
<text  x="84.00" y="339.79" font-size="6.18" fill="#2a2424" textLength="74.80" lengthAdjust="spacingAndGlyphs" stroke="#2a2424" stroke-width="0.12" >IlanisMT5 (AUDUSDmicro,M1)</text>
<text class="m" x="168.60" y="339.87" font-size="5.5" fill="#303030" textLength="278.97" lengthAdjust="spacingAndGlyphs" stroke="#303030" stroke-width="0.04" >IlanisMT5: SellPositionOpen(): Incorrect data for the structure of the trade request!</text>
<rect x="7.20" y="342.40" width="733.40" height="9.36" fill="#ebebeb" />
<circle cx="12.3" cy="347.18" r="1.3" fill="#f4f4f4" stroke="#707070" stroke-width="0.65"/>
<text  x="17.70" y="349.15" font-size="6.18" fill="#2a2424" textLength="55.60" lengthAdjust="spacingAndGlyphs" stroke="#2a2424" stroke-width="0.12" >2017.12.07 16:18:11.811</text>
<text  x="84.00" y="349.15" font-size="6.18" fill="#2a2424" textLength="74.80" lengthAdjust="spacingAndGlyphs" stroke="#2a2424" stroke-width="0.12" >IlanisMT5 (AUDUSDmicro,M1)</text>
<text class="m" x="168.60" y="349.23" font-size="5.5" fill="#303030" textLength="374.15" lengthAdjust="spacingAndGlyphs" stroke="#303030" stroke-width="0.04" >IlanisMT5: SellPositionOpen(): OrderCheck(): An unsupported type of execution of the remainder order is indicated.</text>
<circle cx="12.3" cy="356.54" r="1.3" fill="#f4f4f4" stroke="#707070" stroke-width="0.65"/>
<text  x="17.70" y="358.51" font-size="6.18" fill="#2a2424" textLength="55.60" lengthAdjust="spacingAndGlyphs" stroke="#2a2424" stroke-width="0.12" >2017.12.07 16:18:11.919</text>
<text  x="84.00" y="358.51" font-size="6.18" fill="#2a2424" textLength="74.80" lengthAdjust="spacingAndGlyphs" stroke="#2a2424" stroke-width="0.12" >IlanisMT5 (AUDUSDmicro,M1)</text>
<text class="m" x="168.60" y="358.59" font-size="5.5" fill="#303030" textLength="278.97" lengthAdjust="spacingAndGlyphs" stroke="#303030" stroke-width="0.04" >IlanisMT5: SellPositionOpen(): Incorrect data for the structure of the trade request!</text>
<rect x="7.20" y="361.12" width="733.40" height="9.36" fill="#ebebeb" />
<circle cx="12.3" cy="365.90" r="1.3" fill="#f4f4f4" stroke="#707070" stroke-width="0.65"/>
<text  x="17.70" y="367.87" font-size="6.18" fill="#2a2424" textLength="55.60" lengthAdjust="spacingAndGlyphs" stroke="#2a2424" stroke-width="0.12" >2017.12.07 16:18:11.919</text>
<text  x="84.00" y="367.87" font-size="6.18" fill="#2a2424" textLength="74.80" lengthAdjust="spacingAndGlyphs" stroke="#2a2424" stroke-width="0.12" >IlanisMT5 (AUDUSDmicro,M1)</text>
<text class="m" x="168.60" y="367.95" font-size="5.5" fill="#303030" textLength="374.15" lengthAdjust="spacingAndGlyphs" stroke="#303030" stroke-width="0.04" >IlanisMT5: SellPositionOpen(): OrderCheck(): An unsupported type of execution of the remainder order is indicated.</text>
<circle cx="12.3" cy="375.26" r="1.3" fill="#f4f4f4" stroke="#707070" stroke-width="0.65"/>
<text  x="17.70" y="377.23" font-size="6.18" fill="#2a2424" textLength="55.60" lengthAdjust="spacingAndGlyphs" stroke="#2a2424" stroke-width="0.12" >2017.12.07 16:18:11.988</text>
<text  x="84.00" y="377.23" font-size="6.18" fill="#2a2424" textLength="74.80" lengthAdjust="spacingAndGlyphs" stroke="#2a2424" stroke-width="0.12" >IlanisMT5 (AUDUSDmicro,M1)</text>
<text class="m" x="168.60" y="377.31" font-size="5.5" fill="#303030" textLength="278.97" lengthAdjust="spacingAndGlyphs" stroke="#303030" stroke-width="0.04" >IlanisMT5: SellPositionOpen(): Incorrect data for the structure of the trade request!</text>
<rect x="7.20" y="379.84" width="733.40" height="9.36" fill="#ebebeb" />
<circle cx="12.3" cy="384.62" r="1.3" fill="#f4f4f4" stroke="#707070" stroke-width="0.65"/>
<text  x="17.70" y="386.59" font-size="6.18" fill="#2a2424" textLength="55.60" lengthAdjust="spacingAndGlyphs" stroke="#2a2424" stroke-width="0.12" >2017.12.07 16:18:11.988</text>
<text  x="84.00" y="386.59" font-size="6.18" fill="#2a2424" textLength="74.80" lengthAdjust="spacingAndGlyphs" stroke="#2a2424" stroke-width="0.12" >IlanisMT5 (AUDUSDmicro,M1)</text>
<text class="m" x="168.60" y="386.67" font-size="5.5" fill="#303030" textLength="374.15" lengthAdjust="spacingAndGlyphs" stroke="#303030" stroke-width="0.04" >IlanisMT5: SellPositionOpen(): OrderCheck(): An unsupported type of execution of the remainder order is indicated.</text>
<rect x="7.20" y="389.00" width="733.40" height="9.56" fill="#3399ff" />
<circle cx="12.3" cy="393.98" r="1.3" fill="#fff7e0" stroke="#e8e8e8" stroke-width="0.65"/>
<text  x="17.70" y="395.95" font-size="6.18" fill="#ffffff" textLength="55.60" lengthAdjust="spacingAndGlyphs" stroke="#ffffff" stroke-width="0.12" >2017.12.07 16:18:20.487</text>
<text  x="84.00" y="395.95" font-size="6.18" fill="#ffffff" textLength="80.30" lengthAdjust="spacingAndGlyphs" stroke="#ffffff" stroke-width="0.12" >Margin_Mode (AUDUSDmicro,...</text>
<text class="m" x="168.60" y="396.03" font-size="5.5" fill="#e6f2ff" textLength="213.33" lengthAdjust="spacingAndGlyphs" stroke="#e6f2ff" stroke-width="0.05" >Margin Mode: ACCOUNT_MARGIN_MODE_RETAIL_HEDGING.  Hedging allowed</text>
<line x1="82.80" y1="284.60" x2="82.80" y2="398.40" stroke="#e2e2e2" stroke-width="0.6" />
<line x1="167.00" y1="284.60" x2="167.00" y2="398.40" stroke="#e2e2e2" stroke-width="0.6" />
<rect x="740.60" y="284.60" width="15.40" height="114.00" fill="#f0f0f0" />
<line x1="740.80" y1="284.60" x2="740.80" y2="398.40" stroke="#e0e0e0" stroke-width="0.5" />
<path d="M743.6 290.2 L745.4 288 L747.2 290.2 Z" fill="#505050"/>
<path d="M743.6 394 L745.4 396.2 L747.2 394 Z" fill="#505050"/>
<rect x="741.60" y="365.80" width="7.00" height="6.80" fill="url(#gb)" rx="0.8" stroke="#9a9a9a" stroke-width="0.6"/>
<line x1="7.20" y1="398.80" x2="756.00" y2="398.80" stroke="#5a5a5a" stroke-width="0.8" />
<text  x="13.50" y="406.71" font-size="6.7" fill="#8e8e8e" textLength="54.50" lengthAdjust="spacingAndGlyphs" stroke="#8e8e8e" stroke-width="0.12" >Operazione di Trading</text>
<text  x="77.50" y="406.71" font-size="6.7" fill="#8e8e8e" textLength="28.50" lengthAdjust="spacingAndGlyphs" stroke="#8e8e8e" stroke-width="0.12" >Esposizione</text>
<text  x="115.50" y="406.71" font-size="6.7" fill="#8e8e8e" textLength="27.50" lengthAdjust="spacingAndGlyphs" stroke="#8e8e8e" stroke-width="0.12" >CroniStoria</text>
<text  x="152.50" y="406.71" font-size="6.7" fill="#8e8e8e" textLength="17.50" lengthAdjust="spacingAndGlyphs" stroke="#8e8e8e" stroke-width="0.12" >Notizie</text>
<text  x="179.00" y="406.71" font-size="6.7" fill="#8e8e8e" textLength="20.30" lengthAdjust="spacingAndGlyphs" stroke="#8e8e8e" stroke-width="0.12" >Mailbox</text>
<text  x="211.50" y="406.71" font-size="6.7" fill="#8e8e8e" textLength="18.00" lengthAdjust="spacingAndGlyphs" stroke="#8e8e8e" stroke-width="0.12" >Società</text>
<text  x="238.30" y="406.71" font-size="6.7" fill="#8e8e8e" textLength="21.20" lengthAdjust="spacingAndGlyphs" stroke="#8e8e8e" stroke-width="0.12" >Mercato</text>
<text  x="269.00" y="406.71" font-size="6.7" fill="#8e8e8e" textLength="17.00" lengthAdjust="spacingAndGlyphs" stroke="#8e8e8e" stroke-width="0.12" >Allarmi</text>
<text  x="296.00" y="406.71" font-size="6.7" fill="#8e8e8e" textLength="18.00" lengthAdjust="spacingAndGlyphs" stroke="#8e8e8e" stroke-width="0.12" >Segnali</text>
<text  x="323.00" y="406.71" font-size="6.7" fill="#8e8e8e" textLength="24.50" lengthAdjust="spacingAndGlyphs" stroke="#8e8e8e" stroke-width="0.12" >Biblioteca</text>
<line x1="73.00" y1="401.20" x2="73.00" y2="407.60" stroke="#7a7a7a" stroke-width="0.6" />
<line x1="111.00" y1="401.20" x2="111.00" y2="407.60" stroke="#7a7a7a" stroke-width="0.6" />
<line x1="148.00" y1="401.20" x2="148.00" y2="407.60" stroke="#7a7a7a" stroke-width="0.6" />
<line x1="175.00" y1="401.20" x2="175.00" y2="407.60" stroke="#7a7a7a" stroke-width="0.6" />
<line x1="207.00" y1="401.20" x2="207.00" y2="407.60" stroke="#7a7a7a" stroke-width="0.6" />
<line x1="234.00" y1="401.20" x2="234.00" y2="407.60" stroke="#7a7a7a" stroke-width="0.6" />
<line x1="264.00" y1="401.20" x2="264.00" y2="407.60" stroke="#7a7a7a" stroke-width="0.6" />
<line x1="291.50" y1="401.20" x2="291.50" y2="407.60" stroke="#7a7a7a" stroke-width="0.6" />
<line x1="318.50" y1="401.20" x2="318.50" y2="407.60" stroke="#7a7a7a" stroke-width="0.6" />
<line x1="417.50" y1="401.20" x2="417.50" y2="407.60" stroke="#7a7a7a" stroke-width="0.6" />
<text  x="200.40" y="408.11" font-size="4.74" fill="#e02020" font-weight="bold" stroke="#e02020" stroke-width="0.12" >6</text>
<path d="M352.2 398.4 V407.8 Q352.2 409 353.4 409 H386.4 Q387.6 409 387.6 407.8 V398.4" fill="#ffffff" stroke="#3c3c3c" stroke-width="0.8"/>
<text  x="357.00" y="406.71" font-size="6.7" fill="#1a1a1a" textLength="26.00" lengthAdjust="spacingAndGlyphs" stroke="#1a1a1a" stroke-width="0.12" >Consiglieri</text>
<text  x="392.60" y="406.71" font-size="6.7" fill="#8e8e8e" textLength="20.40" lengthAdjust="spacingAndGlyphs" stroke="#8e8e8e" stroke-width="0.12" >Registro</text>
<text  x="690.00" y="406.71" font-size="6.7" fill="#1a1a1a" textLength="52.60" lengthAdjust="spacingAndGlyphs" stroke="#1a1a1a" stroke-width="0.12" >Tester della Strategia</text>
<line x1="-6.00" y1="410.40" x2="756.00" y2="410.40" stroke="#d9d9d9" stroke-width="0.6" />
<text  x="2.00" y="419.41" font-size="6.7" fill="#1a1a1a" textLength="49.00" lengthAdjust="spacingAndGlyphs" stroke="#1a1a1a" stroke-width="0.12" >Per l'Aiuto, premi F1</text>
<text  x="428.00" y="419.41" font-size="6.7" fill="#1a1a1a" textLength="41.60" lengthAdjust="spacingAndGlyphs" stroke="#1a1a1a" stroke-width="0.12" >Market Overview</text>
<line x1="425.50" y1="412.20" x2="425.50" y2="421.60" stroke="#b8b8b8" stroke-width="0.6" />
<line x1="485.00" y1="412.20" x2="485.00" y2="421.60" stroke="#b8b8b8" stroke-width="0.6" />
<line x1="531.50" y1="412.20" x2="531.50" y2="421.60" stroke="#b8b8b8" stroke-width="0.6" />
<line x1="564.50" y1="412.20" x2="564.50" y2="421.60" stroke="#b8b8b8" stroke-width="0.6" />
<line x1="597.50" y1="412.20" x2="597.50" y2="421.60" stroke="#b8b8b8" stroke-width="0.6" />
<line x1="630.50" y1="412.20" x2="630.50" y2="421.60" stroke="#b8b8b8" stroke-width="0.6" />
<line x1="663.00" y1="412.20" x2="663.00" y2="421.60" stroke="#b8b8b8" stroke-width="0.6" />
<line x1="693.00" y1="412.20" x2="693.00" y2="421.60" stroke="#b8b8b8" stroke-width="0.6" />
<rect x="696.40" y="412.40" width="4.60" height="6.60" fill="#3f8ee0" rx="0.5"/>
<rect x="697.20" y="413.20" width="3.00" height="2.40" fill="#d8ecff" />
<circle cx="701.8" cy="418.8" r="2.1" fill="#3cb030" stroke="#f0f0f0" stroke-width="0.4"/>
<text  x="706.00" y="419.37" font-size="6.59" fill="#1a1a1a" textLength="31.00" lengthAdjust="spacingAndGlyphs" stroke="#1a1a1a" stroke-width="0.12" >87.9 / 4.3 Mb</text>
<g>
<path d="M727.6 401.2 L735 407.8" stroke="#ffffff" stroke-width="6.6" stroke-linecap="round"/>
<circle cx="720" cy="392.9" r="11.5" fill="#ffffff"/>
<path d="M727 400.6 L735 407.8" stroke="#363636" stroke-width="4.2" stroke-linecap="round"/>
<circle cx="720" cy="392.9" r="8.8" fill="#ffffff" stroke="#363636" stroke-width="3.0"/>
<path d="M715 392.9 H725 M720 387.9 V397.9" stroke="#363636" stroke-width="2.5"/>
</g>
</g>
</svg></body></html>
